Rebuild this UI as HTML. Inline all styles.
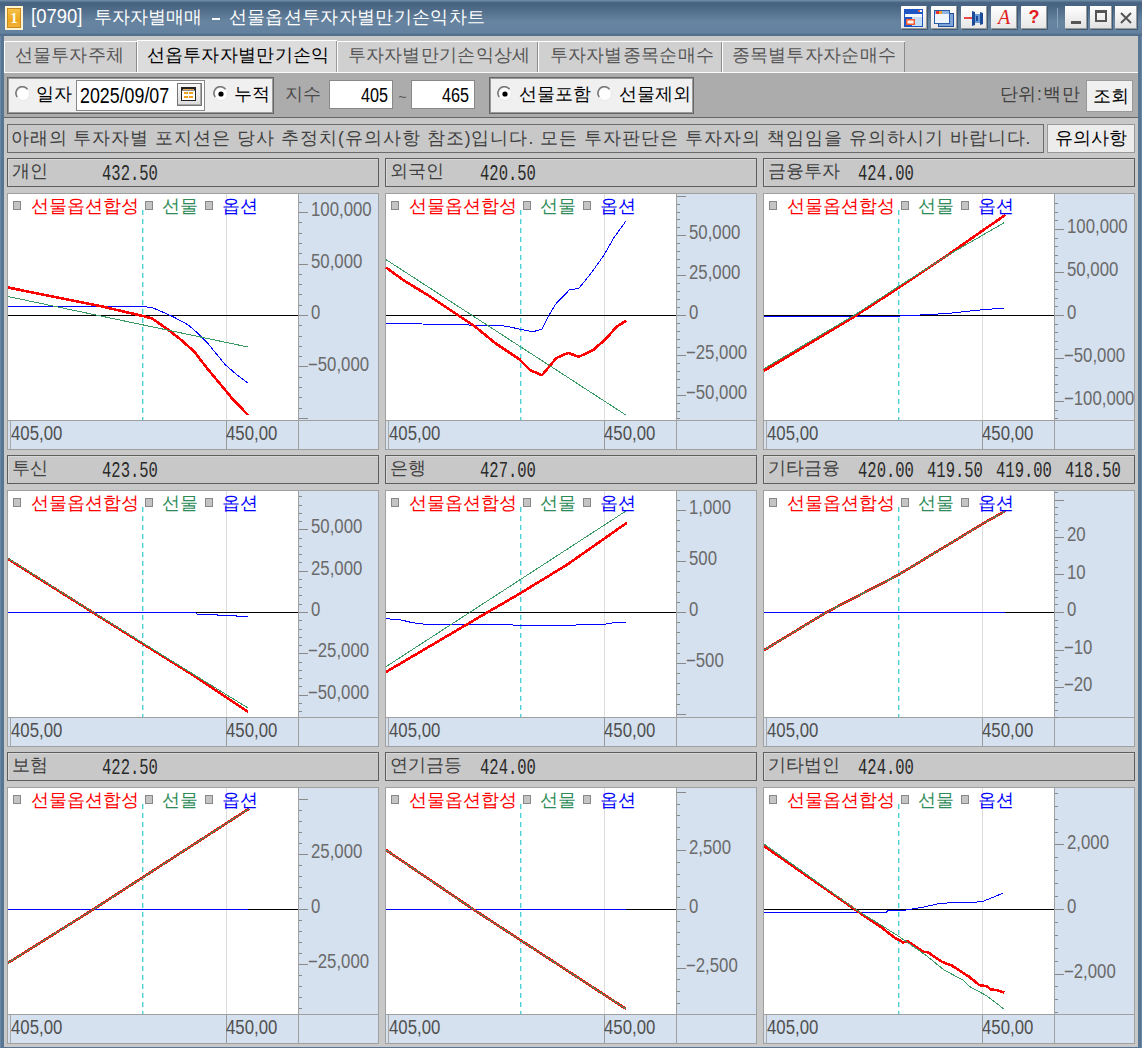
<!DOCTYPE html>
<html><head><meta charset="utf-8"><style>
html,body{margin:0;padding:0;}
body{width:1142px;height:1048px;overflow:hidden;position:relative;background:#5f7d9b;font-family:"Liberation Sans",sans-serif;}
</style></head><body>
<div style="position:absolute;left:0px;top:0px;width:1142px;height:36px;background:linear-gradient(to bottom,#6c89a3 0px,#6c89a3 1px,#4a6684 2px,#476381 5px,#6784a0 22px,#6382a0 33px,#56728f 34px,#516d8b 36px)"></div>
<div style="position:absolute;left:0px;top:36px;width:1142px;height:1012px;background:#587694"></div>
<div style="position:absolute;left:0px;top:36px;width:1px;height:1012px;background:#6a88a6"></div>
<div style="position:absolute;left:1141px;top:36px;width:1px;height:1012px;background:#6a88a6"></div>
<div style="position:absolute;left:4px;top:36px;width:1134px;height:1011px;background:#c8c8c8"></div>
<div style="position:absolute;left:5px;top:6px;width:18px;height:24px;background:#fff3d0;"></div>
<div style="position:absolute;left:7px;top:8px;width:14px;height:20px;background:linear-gradient(#f7c34a,#eea71f 60%,#f2b23a);box-shadow:inset 0 0 0 1px #c88a20;"></div>
<div style="position:absolute;left:7px;top:9px;width:14px;height:18px;font-family:'Liberation Serif',serif;font-weight:bold;font-size:15px;line-height:18px;text-align:center;color:#fffbe6">1</div>
<div style="position:absolute;left:30.98px;top:6.45px;font-size:20.5px;line-height:20.5px;white-space:nowrap;color:#ffffff;font-family:'Liberation Sans', sans-serif;transform:scaleX(0.9);transform-origin:0 0;">[0790]</div>
<div style="position:absolute;left:93.50px;top:9.00px;font-size:17.5px;line-height:17.5px;white-space:nowrap;color:#ffffff;font-family:'Liberation Sans', sans-serif;">투자자별매매</div>
<div style="position:absolute;left:212px;top:18px;width:8px;height:2px;background:#f4f6f8"></div>
<div style="position:absolute;left:228.50px;top:9.00px;font-size:17.5px;line-height:17.5px;white-space:nowrap;color:#ffffff;font-family:'Liberation Sans', sans-serif;letter-spacing:0.35px">선물옵션투자자별만기손익차트</div>
<div style="position:absolute;left:901px;top:6px;width:26px;height:23px;background:linear-gradient(#ffffff,#e6e6e6);box-shadow:inset -1px -1px 0 #9a9a9a, 1px 1px 0 #3f5a76;border-radius:1px"></div>
<div style="position:absolute;left:931px;top:6px;width:26px;height:23px;background:linear-gradient(#ffffff,#e6e6e6);box-shadow:inset -1px -1px 0 #9a9a9a, 1px 1px 0 #3f5a76;border-radius:1px"></div>
<div style="position:absolute;left:961px;top:6px;width:26px;height:23px;background:linear-gradient(#ffffff,#e6e6e6);box-shadow:inset -1px -1px 0 #9a9a9a, 1px 1px 0 #3f5a76;border-radius:1px"></div>
<div style="position:absolute;left:991px;top:6px;width:26px;height:23px;background:linear-gradient(#ffffff,#e6e6e6);box-shadow:inset -1px -1px 0 #9a9a9a, 1px 1px 0 #3f5a76;border-radius:1px"></div>
<div style="position:absolute;left:1021px;top:6px;width:26px;height:23px;background:linear-gradient(#ffffff,#e6e6e6);box-shadow:inset -1px -1px 0 #9a9a9a, 1px 1px 0 #3f5a76;border-radius:1px"></div>
<svg style="position:absolute;left:901px;top:6px" width="26" height="23"><rect x="3" y="3" width="19" height="18" fill="#1f56c4"/><rect x="4" y="8" width="17" height="3" fill="#f4f8ff"/><rect x="11" y="11" width="10" height="9" fill="#c4def8"/><rect x="17" y="4" width="2" height="2" fill="#f06040"/><rect x="19" y="4" width="2" height="2" fill="#f0f0f0"/><rect x="5" y="13" width="9" height="6" fill="#ff5a30"/><rect x="6.5" y="14.5" width="6" height="3" fill="#f8f8f8"/></svg>
<svg style="position:absolute;left:931px;top:6px" width="26" height="23"><rect x="7.5" y="7.5" width="15" height="13" fill="#7fa4d8" stroke="#1f4f9c"/><rect x="3.5" y="4.5" width="15" height="13" fill="#eef4fc" stroke="#2a5aa8"/><rect x="4" y="5" width="14" height="3" fill="#8fb4e4"/><rect x="5" y="5" width="3" height="3" fill="#e83030"/><rect x="8" y="5" width="3" height="3" fill="#f0a030"/></svg>
<svg style="position:absolute;left:961px;top:6px" width="26" height="23"><rect x="3" y="11" width="8" height="2" fill="#e84848"/><path d="M11 5 L14 6 L14 19 L11 20 Z" fill="#1c4a98"/><rect x="14" y="8" width="5" height="9" fill="#6a9ad8"/><rect x="15" y="10" width="2" height="5" fill="#1c4a98"/><path d="M19 6 L22 7 L22 18 L19 19 Z" fill="#1c4a98"/></svg>
<div style="position:absolute;left:991px;top:6px;width:26px;height:23px;font-family:'Liberation Serif',serif;font-style:italic;font-size:20px;line-height:23px;text-align:center;color:#e02020">A</div>
<div style="position:absolute;left:1021px;top:6px;width:26px;height:23px;font-family:'Liberation Sans',sans-serif;font-weight:bold;font-size:18px;line-height:23px;text-align:center;color:#e02020">?</div>
<div style="position:absolute;left:1057px;top:8px;width:1px;height:20px;background:#8aa2ba"></div>
<div style="position:absolute;left:1065px;top:6px;width:22px;height:23px;background:linear-gradient(#ffffff,#e0e0e0);box-shadow:inset -1px -1px 0 #9a9a9a, 1px 1px 0 #3f5a76"></div>
<div style="position:absolute;left:1090px;top:6px;width:22px;height:23px;background:linear-gradient(#ffffff,#e0e0e0);box-shadow:inset -1px -1px 0 #9a9a9a, 1px 1px 0 #3f5a76"></div>
<div style="position:absolute;left:1115px;top:6px;width:22px;height:23px;background:linear-gradient(#ffffff,#e0e0e0);box-shadow:inset -1px -1px 0 #9a9a9a, 1px 1px 0 #3f5a76"></div>
<div style="position:absolute;left:1071px;top:21px;width:10px;height:3px;background:#555"></div>
<div style="position:absolute;left:1095px;top:10px;width:12px;height:12px;border:2px solid #555;border-top-width:3px;box-sizing:border-box"></div>
<svg style="position:absolute;left:1115px;top:6px" width="22" height="23"><path d="M6 7 L16 17 M16 7 L6 17" stroke="#555" stroke-width="2"/></svg>
<div style="position:absolute;left:4px;top:41px;width:133px;height:32px;background:#d0d0d0;border-top:1px solid #fff;border-left:1px solid #fff;box-sizing:border-box;box-shadow:inset -1px 0 0 #8c8c8c"></div>
<div style="position:absolute;left:14.50px;top:46.50px;font-size:17.5px;line-height:17.5px;white-space:nowrap;color:#555;font-family:'Liberation Sans', sans-serif;letter-spacing:0.3px">선물투자주체</div>
<div style="position:absolute;left:137px;top:40px;width:200px;height:33px;background:#dcdcdc;border-top:1px solid #fff;border-left:1px solid #fff;box-sizing:border-box;box-shadow:inset -1px 0 0 #999"></div>
<div style="position:absolute;left:146.50px;top:46.50px;font-size:17.5px;line-height:17.5px;white-space:nowrap;color:#000;font-family:'Liberation Sans', sans-serif;letter-spacing:0.3px">선옵투자자별만기손익</div>
<div style="position:absolute;left:337px;top:41px;width:201px;height:32px;background:#d0d0d0;border-top:1px solid #fff;border-left:1px solid #fff;box-sizing:border-box;box-shadow:inset -1px 0 0 #8c8c8c"></div>
<div style="position:absolute;left:347.50px;top:46.50px;font-size:17.5px;line-height:17.5px;white-space:nowrap;color:#555;font-family:'Liberation Sans', sans-serif;letter-spacing:0.3px">투자자별만기손익상세</div>
<div style="position:absolute;left:538px;top:41px;width:184px;height:32px;background:#d0d0d0;border-top:1px solid #fff;border-left:1px solid #fff;box-sizing:border-box;box-shadow:inset -1px 0 0 #8c8c8c"></div>
<div style="position:absolute;left:549.50px;top:46.50px;font-size:17.5px;line-height:17.5px;white-space:nowrap;color:#555;font-family:'Liberation Sans', sans-serif;letter-spacing:0.3px">투자자별종목순매수</div>
<div style="position:absolute;left:722px;top:41px;width:183px;height:32px;background:#d0d0d0;border-top:1px solid #fff;border-left:1px solid #fff;box-sizing:border-box;box-shadow:inset -1px 0 0 #8c8c8c"></div>
<div style="position:absolute;left:731.50px;top:46.50px;font-size:17.5px;line-height:17.5px;white-space:nowrap;color:#555;font-family:'Liberation Sans', sans-serif;letter-spacing:0.3px">종목별투자자순매수</div>
<div style="position:absolute;left:4px;top:72px;width:1134px;height:1px;background:#fafafa"></div>
<div style="position:absolute;left:4px;top:73px;width:1134px;height:44px;background:#acacac"></div>
<div style="position:absolute;left:4px;top:117px;width:1134px;height:1px;background:#666"></div>
<div style="position:absolute;left:7px;top:77px;width:267px;height:37px;background:#f0f0f0;border:1px solid #666;box-sizing:border-box;box-shadow:inset 0 0 0 1px #9a9a9a"></div>
<svg style="position:absolute;left:15px;top:86px" width="16" height="16"><circle cx="8" cy="8" r="6.5" fill="#fff" stroke="#e8e8e8"/><path d="M2.2 11 A6 6 0 0 1 12.5 3.2" fill="none" stroke="#777" stroke-width="1.6"/></svg>
<div style="position:absolute;left:35.50px;top:86.00px;font-size:17.5px;line-height:17.5px;white-space:nowrap;color:#000;font-family:'Liberation Sans', sans-serif;">일자</div>
<div style="position:absolute;left:76px;top:80px;width:129px;height:31px;background:#fff;border:1px solid #888;box-sizing:border-box"></div>
<div style="position:absolute;left:79.90px;top:84.80px;font-size:22px;line-height:22px;white-space:nowrap;color:#000;font-family:'Liberation Sans', sans-serif;transform:scaleX(0.81);transform-origin:0 0;">2025/09/07</div>
<div style="position:absolute;left:177px;top:83px;width:25px;height:23px;background:linear-gradient(#f8f8f8,#dcdcdc);border:1px solid #777;box-sizing:border-box;box-shadow:inset -1px -1px 0 #aaa"></div>
<svg style="position:absolute;left:181px;top:87px" width="15" height="14"><rect x="0.5" y="0.5" width="14" height="13" fill="#fff" stroke="#222"/><rect x="1" y="1" width="13" height="2.5" fill="#222"/><rect x="2" y="2" width="11" height="1" fill="#e0a860"/><rect x="3" y="5" width="4" height="2" fill="#f0a020"/><rect x="8" y="5" width="4" height="2" fill="#f0a020"/><rect x="3" y="9" width="4" height="2" fill="#f0a020"/><rect x="8" y="9" width="4" height="2" fill="#f0a020"/></svg>
<svg style="position:absolute;left:213px;top:86px" width="16" height="16"><circle cx="8" cy="8" r="6.5" fill="#fff" stroke="#e8e8e8"/><path d="M2.2 11 A6 6 0 0 1 12.5 3.2" fill="none" stroke="#777" stroke-width="1.6"/><circle cx="8" cy="8" r="2.6" fill="#000"/></svg>
<div style="position:absolute;left:233.50px;top:86.00px;font-size:17.5px;line-height:17.5px;white-space:nowrap;color:#000;font-family:'Liberation Sans', sans-serif;">누적</div>
<div style="position:absolute;left:284.50px;top:86.00px;font-size:17.5px;line-height:17.5px;white-space:nowrap;color:#4a4a4a;font-family:'Liberation Sans', sans-serif;">지수</div>
<div style="position:absolute;left:329px;top:80px;width:64px;height:29px;background:#fff;border:1px solid #888;box-sizing:border-box"></div>
<div style="position:absolute;left:360.60px;top:85.00px;font-size:20px;line-height:20px;white-space:nowrap;color:#000;font-family:'Liberation Sans', sans-serif;transform:scaleX(0.81);transform-origin:0 0;">405</div>
<div style="position:absolute;left:398.30px;top:89.60px;font-size:14px;line-height:14px;white-space:nowrap;color:#555;font-family:'Liberation Sans', sans-serif;">~</div>
<div style="position:absolute;left:411px;top:80px;width:64px;height:29px;background:#fff;border:1px solid #888;box-sizing:border-box"></div>
<div style="position:absolute;left:442.30px;top:85.00px;font-size:20px;line-height:20px;white-space:nowrap;color:#000;font-family:'Liberation Sans', sans-serif;transform:scaleX(0.81);transform-origin:0 0;">465</div>
<div style="position:absolute;left:489px;top:77px;width:205px;height:37px;background:#f0f0f0;border:1px solid #666;box-sizing:border-box;box-shadow:inset 0 0 0 1px #9a9a9a"></div>
<svg style="position:absolute;left:497px;top:86px" width="16" height="16"><circle cx="8" cy="8" r="6.5" fill="#fff" stroke="#e8e8e8"/><path d="M2.2 11 A6 6 0 0 1 12.5 3.2" fill="none" stroke="#777" stroke-width="1.6"/><circle cx="8" cy="8" r="2.6" fill="#000"/></svg>
<div style="position:absolute;left:518.50px;top:86.00px;font-size:17.5px;line-height:17.5px;white-space:nowrap;color:#000;font-family:'Liberation Sans', sans-serif;">선물포함</div>
<svg style="position:absolute;left:597px;top:86px" width="16" height="16"><circle cx="8" cy="8" r="6.5" fill="#fff" stroke="#e8e8e8"/><path d="M2.2 11 A6 6 0 0 1 12.5 3.2" fill="none" stroke="#777" stroke-width="1.6"/></svg>
<div style="position:absolute;left:618.50px;top:86.00px;font-size:17.5px;line-height:17.5px;white-space:nowrap;color:#000;font-family:'Liberation Sans', sans-serif;">선물제외</div>
<div style="position:absolute;left:999.50px;top:86.30px;font-size:17.5px;line-height:17.5px;white-space:nowrap;color:#404040;font-family:'Liberation Sans', sans-serif;letter-spacing:0.8px">단위:백만</div>
<div style="position:absolute;left:1086px;top:80px;width:47px;height:32px;background:#f0f0f0;border:1px solid #999;box-sizing:border-box"></div>
<div style="position:absolute;left:1092.50px;top:87.70px;font-size:17.5px;line-height:17.5px;white-space:nowrap;color:#000;font-family:'Liberation Sans', sans-serif;">조회</div>
<div style="position:absolute;left:7px;top:124px;width:1037px;height:29px;background:#c8c8c8;border:1px solid #6a6a6a;box-sizing:border-box"></div>
<div style="position:absolute;left:10.50px;top:130.30px;font-size:17.5px;line-height:17.5px;white-space:nowrap;color:#404040;font-family:'Liberation Sans', sans-serif;letter-spacing:1.0px">아래의 투자자별 포지션은 당사 추정치(유의사항 참조)입니다. 모든 투자판단은 투자자의 책임임을 유의하시기 바랍니다.</div>
<div style="position:absolute;left:1047px;top:124px;width:88px;height:29px;background:#ececec;border:1px solid #999;box-sizing:border-box"></div>
<div style="position:absolute;left:1054.50px;top:129.60px;font-size:17.5px;line-height:17.5px;white-space:nowrap;color:#000;font-family:'Liberation Sans', sans-serif;">유의사항</div>
<div style="position:absolute;left:7px;top:158px;width:372px;height:29px;background:#c8c8c8;border:1px solid #5e5e5e;box-sizing:border-box;box-shadow:inset 1px 1px 0 #d8d8d8"></div>
<div style="position:absolute;left:7px;top:193px;width:372px;height:257px;background:#d5e1ef;border:1px solid #a0a0a0;box-sizing:border-box"></div>
<div style="position:absolute;left:8px;top:194px;width:290px;height:226px;background:#ffffff"></div>
<div style="position:absolute;left:385px;top:158px;width:372px;height:29px;background:#c8c8c8;border:1px solid #5e5e5e;box-sizing:border-box;box-shadow:inset 1px 1px 0 #d8d8d8"></div>
<div style="position:absolute;left:385px;top:193px;width:372px;height:257px;background:#d5e1ef;border:1px solid #a0a0a0;box-sizing:border-box"></div>
<div style="position:absolute;left:386px;top:194px;width:290px;height:226px;background:#ffffff"></div>
<div style="position:absolute;left:763px;top:158px;width:372px;height:29px;background:#c8c8c8;border:1px solid #5e5e5e;box-sizing:border-box;box-shadow:inset 1px 1px 0 #d8d8d8"></div>
<div style="position:absolute;left:763px;top:193px;width:372px;height:257px;background:#d5e1ef;border:1px solid #a0a0a0;box-sizing:border-box"></div>
<div style="position:absolute;left:764px;top:194px;width:290px;height:226px;background:#ffffff"></div>
<div style="position:absolute;left:7px;top:455px;width:372px;height:29px;background:#c8c8c8;border:1px solid #5e5e5e;box-sizing:border-box;box-shadow:inset 1px 1px 0 #d8d8d8"></div>
<div style="position:absolute;left:7px;top:490px;width:372px;height:257px;background:#d5e1ef;border:1px solid #a0a0a0;box-sizing:border-box"></div>
<div style="position:absolute;left:8px;top:491px;width:290px;height:226px;background:#ffffff"></div>
<div style="position:absolute;left:385px;top:455px;width:372px;height:29px;background:#c8c8c8;border:1px solid #5e5e5e;box-sizing:border-box;box-shadow:inset 1px 1px 0 #d8d8d8"></div>
<div style="position:absolute;left:385px;top:490px;width:372px;height:257px;background:#d5e1ef;border:1px solid #a0a0a0;box-sizing:border-box"></div>
<div style="position:absolute;left:386px;top:491px;width:290px;height:226px;background:#ffffff"></div>
<div style="position:absolute;left:763px;top:455px;width:372px;height:29px;background:#c8c8c8;border:1px solid #5e5e5e;box-sizing:border-box;box-shadow:inset 1px 1px 0 #d8d8d8"></div>
<div style="position:absolute;left:763px;top:490px;width:372px;height:257px;background:#d5e1ef;border:1px solid #a0a0a0;box-sizing:border-box"></div>
<div style="position:absolute;left:764px;top:491px;width:290px;height:226px;background:#ffffff"></div>
<div style="position:absolute;left:7px;top:752px;width:372px;height:29px;background:#c8c8c8;border:1px solid #5e5e5e;box-sizing:border-box;box-shadow:inset 1px 1px 0 #d8d8d8"></div>
<div style="position:absolute;left:7px;top:787px;width:372px;height:257px;background:#d5e1ef;border:1px solid #a0a0a0;box-sizing:border-box"></div>
<div style="position:absolute;left:8px;top:788px;width:290px;height:226px;background:#ffffff"></div>
<div style="position:absolute;left:385px;top:752px;width:372px;height:29px;background:#c8c8c8;border:1px solid #5e5e5e;box-sizing:border-box;box-shadow:inset 1px 1px 0 #d8d8d8"></div>
<div style="position:absolute;left:385px;top:787px;width:372px;height:257px;background:#d5e1ef;border:1px solid #a0a0a0;box-sizing:border-box"></div>
<div style="position:absolute;left:386px;top:788px;width:290px;height:226px;background:#ffffff"></div>
<div style="position:absolute;left:763px;top:752px;width:372px;height:29px;background:#c8c8c8;border:1px solid #5e5e5e;box-sizing:border-box;box-shadow:inset 1px 1px 0 #d8d8d8"></div>
<div style="position:absolute;left:763px;top:787px;width:372px;height:257px;background:#d5e1ef;border:1px solid #a0a0a0;box-sizing:border-box"></div>
<div style="position:absolute;left:764px;top:788px;width:290px;height:226px;background:#ffffff"></div>
<svg style="position:absolute;left:0;top:0" width="1142" height="1048" shape-rendering="crispEdges"><rect x="8" y="420" width="370" height="1" fill="#a0a0a0"/>
<rect x="298" y="194" width="1" height="255" fill="#a0a0a0"/>
<rect x="10" y="421" width="1" height="28" fill="#a8a8a8"/>
<rect x="226" y="194" width="1" height="226" fill="#dcdcdc"/>
<rect x="226" y="421" width="1" height="28" fill="#9a9a9a"/>
<rect x="142" y="210" width="1" height="5" fill="#4cd2d6"/>
<rect x="143" y="210" width="1" height="5" fill="#b8ecec"/>
<rect x="142" y="219" width="1" height="5" fill="#4cd2d6"/>
<rect x="143" y="219" width="1" height="5" fill="#b8ecec"/>
<rect x="142" y="228" width="1" height="5" fill="#4cd2d6"/>
<rect x="143" y="228" width="1" height="5" fill="#b8ecec"/>
<rect x="142" y="237" width="1" height="5" fill="#4cd2d6"/>
<rect x="143" y="237" width="1" height="5" fill="#b8ecec"/>
<rect x="142" y="246" width="1" height="5" fill="#4cd2d6"/>
<rect x="143" y="246" width="1" height="5" fill="#b8ecec"/>
<rect x="142" y="255" width="1" height="5" fill="#4cd2d6"/>
<rect x="143" y="255" width="1" height="5" fill="#b8ecec"/>
<rect x="142" y="264" width="1" height="5" fill="#4cd2d6"/>
<rect x="143" y="264" width="1" height="5" fill="#b8ecec"/>
<rect x="142" y="273" width="1" height="5" fill="#4cd2d6"/>
<rect x="143" y="273" width="1" height="5" fill="#b8ecec"/>
<rect x="142" y="282" width="1" height="5" fill="#4cd2d6"/>
<rect x="143" y="282" width="1" height="5" fill="#b8ecec"/>
<rect x="142" y="291" width="1" height="5" fill="#4cd2d6"/>
<rect x="143" y="291" width="1" height="5" fill="#b8ecec"/>
<rect x="142" y="300" width="1" height="5" fill="#4cd2d6"/>
<rect x="143" y="300" width="1" height="5" fill="#b8ecec"/>
<rect x="142" y="309" width="1" height="5" fill="#4cd2d6"/>
<rect x="143" y="309" width="1" height="5" fill="#b8ecec"/>
<rect x="142" y="318" width="1" height="5" fill="#4cd2d6"/>
<rect x="143" y="318" width="1" height="5" fill="#b8ecec"/>
<rect x="142" y="327" width="1" height="5" fill="#4cd2d6"/>
<rect x="143" y="327" width="1" height="5" fill="#b8ecec"/>
<rect x="142" y="336" width="1" height="5" fill="#4cd2d6"/>
<rect x="143" y="336" width="1" height="5" fill="#b8ecec"/>
<rect x="142" y="345" width="1" height="5" fill="#4cd2d6"/>
<rect x="143" y="345" width="1" height="5" fill="#b8ecec"/>
<rect x="142" y="354" width="1" height="5" fill="#4cd2d6"/>
<rect x="143" y="354" width="1" height="5" fill="#b8ecec"/>
<rect x="142" y="363" width="1" height="5" fill="#4cd2d6"/>
<rect x="143" y="363" width="1" height="5" fill="#b8ecec"/>
<rect x="142" y="372" width="1" height="5" fill="#4cd2d6"/>
<rect x="143" y="372" width="1" height="5" fill="#b8ecec"/>
<rect x="142" y="381" width="1" height="5" fill="#4cd2d6"/>
<rect x="143" y="381" width="1" height="5" fill="#b8ecec"/>
<rect x="142" y="390" width="1" height="5" fill="#4cd2d6"/>
<rect x="143" y="390" width="1" height="5" fill="#b8ecec"/>
<rect x="142" y="399" width="1" height="5" fill="#4cd2d6"/>
<rect x="143" y="399" width="1" height="5" fill="#b8ecec"/>
<rect x="142" y="408" width="1" height="5" fill="#4cd2d6"/>
<rect x="143" y="408" width="1" height="5" fill="#b8ecec"/>
<rect x="142" y="417" width="1" height="3" fill="#4cd2d6"/>
<rect x="143" y="417" width="1" height="3" fill="#b8ecec"/>
<rect x="299" y="202" width="3" height="1" fill="#8a8a8a"/>
<rect x="299" y="212" width="9" height="1" fill="#8a8a8a"/>
<rect x="299" y="222" width="3" height="1" fill="#8a8a8a"/>
<rect x="299" y="233" width="3" height="1" fill="#8a8a8a"/>
<rect x="299" y="243" width="3" height="1" fill="#8a8a8a"/>
<rect x="299" y="253" width="3" height="1" fill="#8a8a8a"/>
<rect x="299" y="264" width="9" height="1" fill="#8a8a8a"/>
<rect x="299" y="274" width="3" height="1" fill="#8a8a8a"/>
<rect x="299" y="284" width="3" height="1" fill="#8a8a8a"/>
<rect x="299" y="294" width="3" height="1" fill="#8a8a8a"/>
<rect x="299" y="305" width="3" height="1" fill="#8a8a8a"/>
<rect x="299" y="315" width="9" height="1" fill="#8a8a8a"/>
<rect x="299" y="325" width="3" height="1" fill="#8a8a8a"/>
<rect x="299" y="336" width="3" height="1" fill="#8a8a8a"/>
<rect x="299" y="346" width="3" height="1" fill="#8a8a8a"/>
<rect x="299" y="356" width="3" height="1" fill="#8a8a8a"/>
<rect x="299" y="366" width="9" height="1" fill="#8a8a8a"/>
<rect x="299" y="377" width="3" height="1" fill="#8a8a8a"/>
<rect x="299" y="387" width="3" height="1" fill="#8a8a8a"/>
<rect x="299" y="397" width="3" height="1" fill="#8a8a8a"/>
<rect x="299" y="408" width="3" height="1" fill="#8a8a8a"/>
<rect x="299" y="418" width="9" height="1" fill="#8a8a8a"/>
<rect x="8" y="315" width="290" height="1" fill="#000"/>
<rect x="13.5" y="201.5" width="7" height="8" fill="#c4c4c4" stroke="#888"/>
<rect x="145.5" y="201.5" width="7" height="8" fill="#c4c4c4" stroke="#888"/>
<rect x="205.5" y="201.5" width="7" height="8" fill="#c4c4c4" stroke="#888"/>
<polyline points="8.0,306.5 144.2,306.5 153.2,308.0 172.5,316.4 188.0,324.8 197.0,332.5 207.3,342.8 225.3,364.7 237.0,375.0 248.0,383.0" fill="none" stroke="#0000ff" stroke-width="1"/>
<polyline points="8.0,287.5 60.0,298.0 100.0,306.0 142.9,316.0 151.9,318.3 168.6,330.0 181.5,340.2 194.4,351.8 207.3,368.6 220.2,384.0 233.0,399.5 248.0,415.0" fill="none" stroke="#ff0000" stroke-width="2.6" stroke-linejoin="round"/>
<polyline points="8.0,296.5 248.0,347.0" fill="none" stroke="#3a9a64" stroke-width="1"/>
<rect x="386" y="420" width="370" height="1" fill="#a0a0a0"/>
<rect x="676" y="194" width="1" height="255" fill="#a0a0a0"/>
<rect x="388" y="421" width="1" height="28" fill="#a8a8a8"/>
<rect x="604" y="194" width="1" height="226" fill="#dcdcdc"/>
<rect x="604" y="421" width="1" height="28" fill="#9a9a9a"/>
<rect x="520" y="210" width="1" height="5" fill="#4cd2d6"/>
<rect x="521" y="210" width="1" height="5" fill="#b8ecec"/>
<rect x="520" y="219" width="1" height="5" fill="#4cd2d6"/>
<rect x="521" y="219" width="1" height="5" fill="#b8ecec"/>
<rect x="520" y="228" width="1" height="5" fill="#4cd2d6"/>
<rect x="521" y="228" width="1" height="5" fill="#b8ecec"/>
<rect x="520" y="237" width="1" height="5" fill="#4cd2d6"/>
<rect x="521" y="237" width="1" height="5" fill="#b8ecec"/>
<rect x="520" y="246" width="1" height="5" fill="#4cd2d6"/>
<rect x="521" y="246" width="1" height="5" fill="#b8ecec"/>
<rect x="520" y="255" width="1" height="5" fill="#4cd2d6"/>
<rect x="521" y="255" width="1" height="5" fill="#b8ecec"/>
<rect x="520" y="264" width="1" height="5" fill="#4cd2d6"/>
<rect x="521" y="264" width="1" height="5" fill="#b8ecec"/>
<rect x="520" y="273" width="1" height="5" fill="#4cd2d6"/>
<rect x="521" y="273" width="1" height="5" fill="#b8ecec"/>
<rect x="520" y="282" width="1" height="5" fill="#4cd2d6"/>
<rect x="521" y="282" width="1" height="5" fill="#b8ecec"/>
<rect x="520" y="291" width="1" height="5" fill="#4cd2d6"/>
<rect x="521" y="291" width="1" height="5" fill="#b8ecec"/>
<rect x="520" y="300" width="1" height="5" fill="#4cd2d6"/>
<rect x="521" y="300" width="1" height="5" fill="#b8ecec"/>
<rect x="520" y="309" width="1" height="5" fill="#4cd2d6"/>
<rect x="521" y="309" width="1" height="5" fill="#b8ecec"/>
<rect x="520" y="318" width="1" height="5" fill="#4cd2d6"/>
<rect x="521" y="318" width="1" height="5" fill="#b8ecec"/>
<rect x="520" y="327" width="1" height="5" fill="#4cd2d6"/>
<rect x="521" y="327" width="1" height="5" fill="#b8ecec"/>
<rect x="520" y="336" width="1" height="5" fill="#4cd2d6"/>
<rect x="521" y="336" width="1" height="5" fill="#b8ecec"/>
<rect x="520" y="345" width="1" height="5" fill="#4cd2d6"/>
<rect x="521" y="345" width="1" height="5" fill="#b8ecec"/>
<rect x="520" y="354" width="1" height="5" fill="#4cd2d6"/>
<rect x="521" y="354" width="1" height="5" fill="#b8ecec"/>
<rect x="520" y="363" width="1" height="5" fill="#4cd2d6"/>
<rect x="521" y="363" width="1" height="5" fill="#b8ecec"/>
<rect x="520" y="372" width="1" height="5" fill="#4cd2d6"/>
<rect x="521" y="372" width="1" height="5" fill="#b8ecec"/>
<rect x="520" y="381" width="1" height="5" fill="#4cd2d6"/>
<rect x="521" y="381" width="1" height="5" fill="#b8ecec"/>
<rect x="520" y="390" width="1" height="5" fill="#4cd2d6"/>
<rect x="521" y="390" width="1" height="5" fill="#b8ecec"/>
<rect x="520" y="399" width="1" height="5" fill="#4cd2d6"/>
<rect x="521" y="399" width="1" height="5" fill="#b8ecec"/>
<rect x="520" y="408" width="1" height="5" fill="#4cd2d6"/>
<rect x="521" y="408" width="1" height="5" fill="#b8ecec"/>
<rect x="520" y="417" width="1" height="3" fill="#4cd2d6"/>
<rect x="521" y="417" width="1" height="3" fill="#b8ecec"/>
<rect x="677" y="196" width="9" height="1" fill="#8a8a8a"/>
<rect x="677" y="204" width="3" height="1" fill="#8a8a8a"/>
<rect x="677" y="212" width="3" height="1" fill="#8a8a8a"/>
<rect x="677" y="219" width="3" height="1" fill="#8a8a8a"/>
<rect x="677" y="227" width="3" height="1" fill="#8a8a8a"/>
<rect x="677" y="235" width="9" height="1" fill="#8a8a8a"/>
<rect x="677" y="243" width="3" height="1" fill="#8a8a8a"/>
<rect x="677" y="251" width="3" height="1" fill="#8a8a8a"/>
<rect x="677" y="259" width="3" height="1" fill="#8a8a8a"/>
<rect x="677" y="267" width="3" height="1" fill="#8a8a8a"/>
<rect x="677" y="275" width="9" height="1" fill="#8a8a8a"/>
<rect x="677" y="283" width="3" height="1" fill="#8a8a8a"/>
<rect x="677" y="291" width="3" height="1" fill="#8a8a8a"/>
<rect x="677" y="299" width="3" height="1" fill="#8a8a8a"/>
<rect x="677" y="307" width="3" height="1" fill="#8a8a8a"/>
<rect x="677" y="315" width="9" height="1" fill="#8a8a8a"/>
<rect x="677" y="323" width="3" height="1" fill="#8a8a8a"/>
<rect x="677" y="331" width="3" height="1" fill="#8a8a8a"/>
<rect x="677" y="339" width="3" height="1" fill="#8a8a8a"/>
<rect x="677" y="347" width="3" height="1" fill="#8a8a8a"/>
<rect x="677" y="355" width="9" height="1" fill="#8a8a8a"/>
<rect x="677" y="363" width="3" height="1" fill="#8a8a8a"/>
<rect x="677" y="371" width="3" height="1" fill="#8a8a8a"/>
<rect x="677" y="379" width="3" height="1" fill="#8a8a8a"/>
<rect x="677" y="387" width="3" height="1" fill="#8a8a8a"/>
<rect x="677" y="395" width="9" height="1" fill="#8a8a8a"/>
<rect x="677" y="403" width="3" height="1" fill="#8a8a8a"/>
<rect x="677" y="411" width="3" height="1" fill="#8a8a8a"/>
<rect x="677" y="418" width="3" height="1" fill="#8a8a8a"/>
<rect x="386" y="315" width="290" height="1" fill="#000"/>
<rect x="391.5" y="201.5" width="7" height="8" fill="#c4c4c4" stroke="#888"/>
<rect x="523.5" y="201.5" width="7" height="8" fill="#c4c4c4" stroke="#888"/>
<rect x="583.5" y="201.5" width="7" height="8" fill="#c4c4c4" stroke="#888"/>
<polyline points="386.0,323.2 422.4,324.0 482.8,325.3 506.5,326.1 519.6,329.2 532.7,331.8 541.9,329.2 548.5,316.1 556.4,303.0 569.5,289.8 578.7,288.5 590.5,274.0 603.6,255.7 614.2,237.3 626.0,221.0" fill="none" stroke="#0000ff" stroke-width="1"/>
<polyline points="386.0,267.5 404.0,280.6 427.7,295.0 451.3,310.8 475.0,326.6 496.0,343.7 519.6,359.4 530.0,370.0 542.0,375.2 556.4,358.0 568.2,352.9 578.7,356.8 593.1,350.2 606.3,338.4 616.8,326.6 626.5,320.5" fill="none" stroke="#ff0000" stroke-width="2.6" stroke-linejoin="round"/>
<polyline points="386.0,259.6 626.0,415.1" fill="none" stroke="#3a9a64" stroke-width="1"/>
<rect x="764" y="420" width="370" height="1" fill="#a0a0a0"/>
<rect x="1054" y="194" width="1" height="255" fill="#a0a0a0"/>
<rect x="766" y="421" width="1" height="28" fill="#a8a8a8"/>
<rect x="982" y="194" width="1" height="226" fill="#dcdcdc"/>
<rect x="982" y="421" width="1" height="28" fill="#9a9a9a"/>
<rect x="898" y="210" width="1" height="5" fill="#4cd2d6"/>
<rect x="899" y="210" width="1" height="5" fill="#b8ecec"/>
<rect x="898" y="219" width="1" height="5" fill="#4cd2d6"/>
<rect x="899" y="219" width="1" height="5" fill="#b8ecec"/>
<rect x="898" y="228" width="1" height="5" fill="#4cd2d6"/>
<rect x="899" y="228" width="1" height="5" fill="#b8ecec"/>
<rect x="898" y="237" width="1" height="5" fill="#4cd2d6"/>
<rect x="899" y="237" width="1" height="5" fill="#b8ecec"/>
<rect x="898" y="246" width="1" height="5" fill="#4cd2d6"/>
<rect x="899" y="246" width="1" height="5" fill="#b8ecec"/>
<rect x="898" y="255" width="1" height="5" fill="#4cd2d6"/>
<rect x="899" y="255" width="1" height="5" fill="#b8ecec"/>
<rect x="898" y="264" width="1" height="5" fill="#4cd2d6"/>
<rect x="899" y="264" width="1" height="5" fill="#b8ecec"/>
<rect x="898" y="273" width="1" height="5" fill="#4cd2d6"/>
<rect x="899" y="273" width="1" height="5" fill="#b8ecec"/>
<rect x="898" y="282" width="1" height="5" fill="#4cd2d6"/>
<rect x="899" y="282" width="1" height="5" fill="#b8ecec"/>
<rect x="898" y="291" width="1" height="5" fill="#4cd2d6"/>
<rect x="899" y="291" width="1" height="5" fill="#b8ecec"/>
<rect x="898" y="300" width="1" height="5" fill="#4cd2d6"/>
<rect x="899" y="300" width="1" height="5" fill="#b8ecec"/>
<rect x="898" y="309" width="1" height="5" fill="#4cd2d6"/>
<rect x="899" y="309" width="1" height="5" fill="#b8ecec"/>
<rect x="898" y="318" width="1" height="5" fill="#4cd2d6"/>
<rect x="899" y="318" width="1" height="5" fill="#b8ecec"/>
<rect x="898" y="327" width="1" height="5" fill="#4cd2d6"/>
<rect x="899" y="327" width="1" height="5" fill="#b8ecec"/>
<rect x="898" y="336" width="1" height="5" fill="#4cd2d6"/>
<rect x="899" y="336" width="1" height="5" fill="#b8ecec"/>
<rect x="898" y="345" width="1" height="5" fill="#4cd2d6"/>
<rect x="899" y="345" width="1" height="5" fill="#b8ecec"/>
<rect x="898" y="354" width="1" height="5" fill="#4cd2d6"/>
<rect x="899" y="354" width="1" height="5" fill="#b8ecec"/>
<rect x="898" y="363" width="1" height="5" fill="#4cd2d6"/>
<rect x="899" y="363" width="1" height="5" fill="#b8ecec"/>
<rect x="898" y="372" width="1" height="5" fill="#4cd2d6"/>
<rect x="899" y="372" width="1" height="5" fill="#b8ecec"/>
<rect x="898" y="381" width="1" height="5" fill="#4cd2d6"/>
<rect x="899" y="381" width="1" height="5" fill="#b8ecec"/>
<rect x="898" y="390" width="1" height="5" fill="#4cd2d6"/>
<rect x="899" y="390" width="1" height="5" fill="#b8ecec"/>
<rect x="898" y="399" width="1" height="5" fill="#4cd2d6"/>
<rect x="899" y="399" width="1" height="5" fill="#b8ecec"/>
<rect x="898" y="408" width="1" height="5" fill="#4cd2d6"/>
<rect x="899" y="408" width="1" height="5" fill="#b8ecec"/>
<rect x="898" y="417" width="1" height="3" fill="#4cd2d6"/>
<rect x="899" y="417" width="1" height="3" fill="#b8ecec"/>
<rect x="1055" y="203" width="3" height="1" fill="#8a8a8a"/>
<rect x="1055" y="212" width="3" height="1" fill="#8a8a8a"/>
<rect x="1055" y="220" width="3" height="1" fill="#8a8a8a"/>
<rect x="1055" y="229" width="9" height="1" fill="#8a8a8a"/>
<rect x="1055" y="238" width="3" height="1" fill="#8a8a8a"/>
<rect x="1055" y="246" width="3" height="1" fill="#8a8a8a"/>
<rect x="1055" y="255" width="3" height="1" fill="#8a8a8a"/>
<rect x="1055" y="263" width="3" height="1" fill="#8a8a8a"/>
<rect x="1055" y="272" width="9" height="1" fill="#8a8a8a"/>
<rect x="1055" y="281" width="3" height="1" fill="#8a8a8a"/>
<rect x="1055" y="289" width="3" height="1" fill="#8a8a8a"/>
<rect x="1055" y="298" width="3" height="1" fill="#8a8a8a"/>
<rect x="1055" y="306" width="3" height="1" fill="#8a8a8a"/>
<rect x="1055" y="315" width="9" height="1" fill="#8a8a8a"/>
<rect x="1055" y="324" width="3" height="1" fill="#8a8a8a"/>
<rect x="1055" y="332" width="3" height="1" fill="#8a8a8a"/>
<rect x="1055" y="341" width="3" height="1" fill="#8a8a8a"/>
<rect x="1055" y="349" width="3" height="1" fill="#8a8a8a"/>
<rect x="1055" y="358" width="9" height="1" fill="#8a8a8a"/>
<rect x="1055" y="367" width="3" height="1" fill="#8a8a8a"/>
<rect x="1055" y="375" width="3" height="1" fill="#8a8a8a"/>
<rect x="1055" y="384" width="3" height="1" fill="#8a8a8a"/>
<rect x="1055" y="392" width="3" height="1" fill="#8a8a8a"/>
<rect x="1055" y="401" width="9" height="1" fill="#8a8a8a"/>
<rect x="1055" y="410" width="3" height="1" fill="#8a8a8a"/>
<rect x="1055" y="418" width="3" height="1" fill="#8a8a8a"/>
<rect x="764" y="315" width="290" height="1" fill="#000"/>
<rect x="769.5" y="201.5" width="7" height="8" fill="#c4c4c4" stroke="#888"/>
<rect x="901.5" y="201.5" width="7" height="8" fill="#c4c4c4" stroke="#888"/>
<rect x="961.5" y="201.5" width="7" height="8" fill="#c4c4c4" stroke="#888"/>
<polyline points="764.0,316.5 889.7,316.5 923.9,314.8 947.5,313.5 984.3,309.5 1004.0,308.2" fill="none" stroke="#0000ff" stroke-width="1"/>
<polyline points="764.0,370.7 853.0,317.4 897.6,288.5 944.9,257.0 984.3,229.4 1005.3,215.0" fill="none" stroke="#ff0000" stroke-width="2.6" stroke-linejoin="round"/>
<polyline points="764.0,368.6 853.0,316.0 897.6,287.0 944.9,257.0 1004.0,222.8" fill="none" stroke="#3a9a64" stroke-width="1"/>
<rect x="8" y="717" width="370" height="1" fill="#a0a0a0"/>
<rect x="298" y="491" width="1" height="255" fill="#a0a0a0"/>
<rect x="10" y="718" width="1" height="28" fill="#a8a8a8"/>
<rect x="226" y="491" width="1" height="226" fill="#dcdcdc"/>
<rect x="226" y="718" width="1" height="28" fill="#9a9a9a"/>
<rect x="142" y="507" width="1" height="5" fill="#4cd2d6"/>
<rect x="143" y="507" width="1" height="5" fill="#b8ecec"/>
<rect x="142" y="516" width="1" height="5" fill="#4cd2d6"/>
<rect x="143" y="516" width="1" height="5" fill="#b8ecec"/>
<rect x="142" y="525" width="1" height="5" fill="#4cd2d6"/>
<rect x="143" y="525" width="1" height="5" fill="#b8ecec"/>
<rect x="142" y="534" width="1" height="5" fill="#4cd2d6"/>
<rect x="143" y="534" width="1" height="5" fill="#b8ecec"/>
<rect x="142" y="543" width="1" height="5" fill="#4cd2d6"/>
<rect x="143" y="543" width="1" height="5" fill="#b8ecec"/>
<rect x="142" y="552" width="1" height="5" fill="#4cd2d6"/>
<rect x="143" y="552" width="1" height="5" fill="#b8ecec"/>
<rect x="142" y="561" width="1" height="5" fill="#4cd2d6"/>
<rect x="143" y="561" width="1" height="5" fill="#b8ecec"/>
<rect x="142" y="570" width="1" height="5" fill="#4cd2d6"/>
<rect x="143" y="570" width="1" height="5" fill="#b8ecec"/>
<rect x="142" y="579" width="1" height="5" fill="#4cd2d6"/>
<rect x="143" y="579" width="1" height="5" fill="#b8ecec"/>
<rect x="142" y="588" width="1" height="5" fill="#4cd2d6"/>
<rect x="143" y="588" width="1" height="5" fill="#b8ecec"/>
<rect x="142" y="597" width="1" height="5" fill="#4cd2d6"/>
<rect x="143" y="597" width="1" height="5" fill="#b8ecec"/>
<rect x="142" y="606" width="1" height="5" fill="#4cd2d6"/>
<rect x="143" y="606" width="1" height="5" fill="#b8ecec"/>
<rect x="142" y="615" width="1" height="5" fill="#4cd2d6"/>
<rect x="143" y="615" width="1" height="5" fill="#b8ecec"/>
<rect x="142" y="624" width="1" height="5" fill="#4cd2d6"/>
<rect x="143" y="624" width="1" height="5" fill="#b8ecec"/>
<rect x="142" y="633" width="1" height="5" fill="#4cd2d6"/>
<rect x="143" y="633" width="1" height="5" fill="#b8ecec"/>
<rect x="142" y="642" width="1" height="5" fill="#4cd2d6"/>
<rect x="143" y="642" width="1" height="5" fill="#b8ecec"/>
<rect x="142" y="651" width="1" height="5" fill="#4cd2d6"/>
<rect x="143" y="651" width="1" height="5" fill="#b8ecec"/>
<rect x="142" y="660" width="1" height="5" fill="#4cd2d6"/>
<rect x="143" y="660" width="1" height="5" fill="#b8ecec"/>
<rect x="142" y="669" width="1" height="5" fill="#4cd2d6"/>
<rect x="143" y="669" width="1" height="5" fill="#b8ecec"/>
<rect x="142" y="678" width="1" height="5" fill="#4cd2d6"/>
<rect x="143" y="678" width="1" height="5" fill="#b8ecec"/>
<rect x="142" y="687" width="1" height="5" fill="#4cd2d6"/>
<rect x="143" y="687" width="1" height="5" fill="#b8ecec"/>
<rect x="142" y="696" width="1" height="5" fill="#4cd2d6"/>
<rect x="143" y="696" width="1" height="5" fill="#b8ecec"/>
<rect x="142" y="705" width="1" height="5" fill="#4cd2d6"/>
<rect x="143" y="705" width="1" height="5" fill="#b8ecec"/>
<rect x="142" y="714" width="1" height="3" fill="#4cd2d6"/>
<rect x="143" y="714" width="1" height="3" fill="#b8ecec"/>
<rect x="299" y="496" width="3" height="1" fill="#8a8a8a"/>
<rect x="299" y="505" width="3" height="1" fill="#8a8a8a"/>
<rect x="299" y="513" width="3" height="1" fill="#8a8a8a"/>
<rect x="299" y="521" width="3" height="1" fill="#8a8a8a"/>
<rect x="299" y="529" width="9" height="1" fill="#8a8a8a"/>
<rect x="299" y="538" width="3" height="1" fill="#8a8a8a"/>
<rect x="299" y="546" width="3" height="1" fill="#8a8a8a"/>
<rect x="299" y="554" width="3" height="1" fill="#8a8a8a"/>
<rect x="299" y="562" width="3" height="1" fill="#8a8a8a"/>
<rect x="299" y="571" width="9" height="1" fill="#8a8a8a"/>
<rect x="299" y="579" width="3" height="1" fill="#8a8a8a"/>
<rect x="299" y="587" width="3" height="1" fill="#8a8a8a"/>
<rect x="299" y="595" width="3" height="1" fill="#8a8a8a"/>
<rect x="299" y="604" width="3" height="1" fill="#8a8a8a"/>
<rect x="299" y="612" width="9" height="1" fill="#8a8a8a"/>
<rect x="299" y="620" width="3" height="1" fill="#8a8a8a"/>
<rect x="299" y="629" width="3" height="1" fill="#8a8a8a"/>
<rect x="299" y="637" width="3" height="1" fill="#8a8a8a"/>
<rect x="299" y="645" width="3" height="1" fill="#8a8a8a"/>
<rect x="299" y="653" width="9" height="1" fill="#8a8a8a"/>
<rect x="299" y="662" width="3" height="1" fill="#8a8a8a"/>
<rect x="299" y="670" width="3" height="1" fill="#8a8a8a"/>
<rect x="299" y="678" width="3" height="1" fill="#8a8a8a"/>
<rect x="299" y="686" width="3" height="1" fill="#8a8a8a"/>
<rect x="299" y="695" width="9" height="1" fill="#8a8a8a"/>
<rect x="299" y="703" width="3" height="1" fill="#8a8a8a"/>
<rect x="299" y="711" width="3" height="1" fill="#8a8a8a"/>
<rect x="8" y="612" width="290" height="1" fill="#000"/>
<rect x="13.5" y="498.5" width="7" height="8" fill="#c4c4c4" stroke="#888"/>
<rect x="145.5" y="498.5" width="7" height="8" fill="#c4c4c4" stroke="#888"/>
<rect x="205.5" y="498.5" width="7" height="8" fill="#c4c4c4" stroke="#888"/>
<polyline points="8.0,612.5 195.4,612.5 196.8,614.0 216.5,614.0 217.8,615.5 236.2,615.5 237.5,616.8 248.0,616.8" fill="none" stroke="#0000ff" stroke-width="1"/>
<polyline points="8.0,559.0 94.3,613.4 196.0,677.0 248.0,711.9" fill="none" stroke="#ff0000" stroke-width="2.6" stroke-linejoin="round"/>
<polyline points="8.0,558.5 94.3,613.0 248.0,708.0" fill="none" stroke="#3a9a64" stroke-width="1"/>
<rect x="386" y="717" width="370" height="1" fill="#a0a0a0"/>
<rect x="676" y="491" width="1" height="255" fill="#a0a0a0"/>
<rect x="388" y="718" width="1" height="28" fill="#a8a8a8"/>
<rect x="604" y="491" width="1" height="226" fill="#dcdcdc"/>
<rect x="604" y="718" width="1" height="28" fill="#9a9a9a"/>
<rect x="520" y="507" width="1" height="5" fill="#4cd2d6"/>
<rect x="521" y="507" width="1" height="5" fill="#b8ecec"/>
<rect x="520" y="516" width="1" height="5" fill="#4cd2d6"/>
<rect x="521" y="516" width="1" height="5" fill="#b8ecec"/>
<rect x="520" y="525" width="1" height="5" fill="#4cd2d6"/>
<rect x="521" y="525" width="1" height="5" fill="#b8ecec"/>
<rect x="520" y="534" width="1" height="5" fill="#4cd2d6"/>
<rect x="521" y="534" width="1" height="5" fill="#b8ecec"/>
<rect x="520" y="543" width="1" height="5" fill="#4cd2d6"/>
<rect x="521" y="543" width="1" height="5" fill="#b8ecec"/>
<rect x="520" y="552" width="1" height="5" fill="#4cd2d6"/>
<rect x="521" y="552" width="1" height="5" fill="#b8ecec"/>
<rect x="520" y="561" width="1" height="5" fill="#4cd2d6"/>
<rect x="521" y="561" width="1" height="5" fill="#b8ecec"/>
<rect x="520" y="570" width="1" height="5" fill="#4cd2d6"/>
<rect x="521" y="570" width="1" height="5" fill="#b8ecec"/>
<rect x="520" y="579" width="1" height="5" fill="#4cd2d6"/>
<rect x="521" y="579" width="1" height="5" fill="#b8ecec"/>
<rect x="520" y="588" width="1" height="5" fill="#4cd2d6"/>
<rect x="521" y="588" width="1" height="5" fill="#b8ecec"/>
<rect x="520" y="597" width="1" height="5" fill="#4cd2d6"/>
<rect x="521" y="597" width="1" height="5" fill="#b8ecec"/>
<rect x="520" y="606" width="1" height="5" fill="#4cd2d6"/>
<rect x="521" y="606" width="1" height="5" fill="#b8ecec"/>
<rect x="520" y="615" width="1" height="5" fill="#4cd2d6"/>
<rect x="521" y="615" width="1" height="5" fill="#b8ecec"/>
<rect x="520" y="624" width="1" height="5" fill="#4cd2d6"/>
<rect x="521" y="624" width="1" height="5" fill="#b8ecec"/>
<rect x="520" y="633" width="1" height="5" fill="#4cd2d6"/>
<rect x="521" y="633" width="1" height="5" fill="#b8ecec"/>
<rect x="520" y="642" width="1" height="5" fill="#4cd2d6"/>
<rect x="521" y="642" width="1" height="5" fill="#b8ecec"/>
<rect x="520" y="651" width="1" height="5" fill="#4cd2d6"/>
<rect x="521" y="651" width="1" height="5" fill="#b8ecec"/>
<rect x="520" y="660" width="1" height="5" fill="#4cd2d6"/>
<rect x="521" y="660" width="1" height="5" fill="#b8ecec"/>
<rect x="520" y="669" width="1" height="5" fill="#4cd2d6"/>
<rect x="521" y="669" width="1" height="5" fill="#b8ecec"/>
<rect x="520" y="678" width="1" height="5" fill="#4cd2d6"/>
<rect x="521" y="678" width="1" height="5" fill="#b8ecec"/>
<rect x="520" y="687" width="1" height="5" fill="#4cd2d6"/>
<rect x="521" y="687" width="1" height="5" fill="#b8ecec"/>
<rect x="520" y="696" width="1" height="5" fill="#4cd2d6"/>
<rect x="521" y="696" width="1" height="5" fill="#b8ecec"/>
<rect x="520" y="705" width="1" height="5" fill="#4cd2d6"/>
<rect x="521" y="705" width="1" height="5" fill="#b8ecec"/>
<rect x="520" y="714" width="1" height="3" fill="#4cd2d6"/>
<rect x="521" y="714" width="1" height="3" fill="#b8ecec"/>
<rect x="677" y="500" width="3" height="1" fill="#8a8a8a"/>
<rect x="677" y="510" width="9" height="1" fill="#8a8a8a"/>
<rect x="677" y="520" width="3" height="1" fill="#8a8a8a"/>
<rect x="677" y="530" width="3" height="1" fill="#8a8a8a"/>
<rect x="677" y="541" width="3" height="1" fill="#8a8a8a"/>
<rect x="677" y="551" width="3" height="1" fill="#8a8a8a"/>
<rect x="677" y="561" width="9" height="1" fill="#8a8a8a"/>
<rect x="677" y="571" width="3" height="1" fill="#8a8a8a"/>
<rect x="677" y="581" width="3" height="1" fill="#8a8a8a"/>
<rect x="677" y="592" width="3" height="1" fill="#8a8a8a"/>
<rect x="677" y="602" width="3" height="1" fill="#8a8a8a"/>
<rect x="677" y="612" width="9" height="1" fill="#8a8a8a"/>
<rect x="677" y="622" width="3" height="1" fill="#8a8a8a"/>
<rect x="677" y="632" width="3" height="1" fill="#8a8a8a"/>
<rect x="677" y="643" width="3" height="1" fill="#8a8a8a"/>
<rect x="677" y="653" width="3" height="1" fill="#8a8a8a"/>
<rect x="677" y="663" width="9" height="1" fill="#8a8a8a"/>
<rect x="677" y="673" width="3" height="1" fill="#8a8a8a"/>
<rect x="677" y="683" width="3" height="1" fill="#8a8a8a"/>
<rect x="677" y="694" width="3" height="1" fill="#8a8a8a"/>
<rect x="677" y="704" width="3" height="1" fill="#8a8a8a"/>
<rect x="677" y="714" width="9" height="1" fill="#8a8a8a"/>
<rect x="386" y="612" width="290" height="1" fill="#000"/>
<rect x="391.5" y="498.5" width="7" height="8" fill="#c4c4c4" stroke="#888"/>
<rect x="523.5" y="498.5" width="7" height="8" fill="#c4c4c4" stroke="#888"/>
<rect x="583.5" y="498.5" width="7" height="8" fill="#c4c4c4" stroke="#888"/>
<polyline points="386.0,618.7 401.4,620.0 411.9,622.6 429.0,624.7 566.9,625.2 603.6,624.4 614.2,622.6 626.0,622.6" fill="none" stroke="#0000ff" stroke-width="1"/>
<polyline points="386.0,672.0 488.0,612.0 519.6,593.7 566.9,564.8 606.3,537.2 626.8,522.8" fill="none" stroke="#ff0000" stroke-width="2.6" stroke-linejoin="round"/>
<polyline points="386.0,666.7 626.0,511.0" fill="none" stroke="#3a9a64" stroke-width="1"/>
<rect x="764" y="717" width="370" height="1" fill="#a0a0a0"/>
<rect x="1054" y="491" width="1" height="255" fill="#a0a0a0"/>
<rect x="766" y="718" width="1" height="28" fill="#a8a8a8"/>
<rect x="982" y="491" width="1" height="226" fill="#dcdcdc"/>
<rect x="982" y="718" width="1" height="28" fill="#9a9a9a"/>
<rect x="898" y="507" width="1" height="5" fill="#4cd2d6"/>
<rect x="899" y="507" width="1" height="5" fill="#b8ecec"/>
<rect x="898" y="516" width="1" height="5" fill="#4cd2d6"/>
<rect x="899" y="516" width="1" height="5" fill="#b8ecec"/>
<rect x="898" y="525" width="1" height="5" fill="#4cd2d6"/>
<rect x="899" y="525" width="1" height="5" fill="#b8ecec"/>
<rect x="898" y="534" width="1" height="5" fill="#4cd2d6"/>
<rect x="899" y="534" width="1" height="5" fill="#b8ecec"/>
<rect x="898" y="543" width="1" height="5" fill="#4cd2d6"/>
<rect x="899" y="543" width="1" height="5" fill="#b8ecec"/>
<rect x="898" y="552" width="1" height="5" fill="#4cd2d6"/>
<rect x="899" y="552" width="1" height="5" fill="#b8ecec"/>
<rect x="898" y="561" width="1" height="5" fill="#4cd2d6"/>
<rect x="899" y="561" width="1" height="5" fill="#b8ecec"/>
<rect x="898" y="570" width="1" height="5" fill="#4cd2d6"/>
<rect x="899" y="570" width="1" height="5" fill="#b8ecec"/>
<rect x="898" y="579" width="1" height="5" fill="#4cd2d6"/>
<rect x="899" y="579" width="1" height="5" fill="#b8ecec"/>
<rect x="898" y="588" width="1" height="5" fill="#4cd2d6"/>
<rect x="899" y="588" width="1" height="5" fill="#b8ecec"/>
<rect x="898" y="597" width="1" height="5" fill="#4cd2d6"/>
<rect x="899" y="597" width="1" height="5" fill="#b8ecec"/>
<rect x="898" y="606" width="1" height="5" fill="#4cd2d6"/>
<rect x="899" y="606" width="1" height="5" fill="#b8ecec"/>
<rect x="898" y="615" width="1" height="5" fill="#4cd2d6"/>
<rect x="899" y="615" width="1" height="5" fill="#b8ecec"/>
<rect x="898" y="624" width="1" height="5" fill="#4cd2d6"/>
<rect x="899" y="624" width="1" height="5" fill="#b8ecec"/>
<rect x="898" y="633" width="1" height="5" fill="#4cd2d6"/>
<rect x="899" y="633" width="1" height="5" fill="#b8ecec"/>
<rect x="898" y="642" width="1" height="5" fill="#4cd2d6"/>
<rect x="899" y="642" width="1" height="5" fill="#b8ecec"/>
<rect x="898" y="651" width="1" height="5" fill="#4cd2d6"/>
<rect x="899" y="651" width="1" height="5" fill="#b8ecec"/>
<rect x="898" y="660" width="1" height="5" fill="#4cd2d6"/>
<rect x="899" y="660" width="1" height="5" fill="#b8ecec"/>
<rect x="898" y="669" width="1" height="5" fill="#4cd2d6"/>
<rect x="899" y="669" width="1" height="5" fill="#b8ecec"/>
<rect x="898" y="678" width="1" height="5" fill="#4cd2d6"/>
<rect x="899" y="678" width="1" height="5" fill="#b8ecec"/>
<rect x="898" y="687" width="1" height="5" fill="#4cd2d6"/>
<rect x="899" y="687" width="1" height="5" fill="#b8ecec"/>
<rect x="898" y="696" width="1" height="5" fill="#4cd2d6"/>
<rect x="899" y="696" width="1" height="5" fill="#b8ecec"/>
<rect x="898" y="705" width="1" height="5" fill="#4cd2d6"/>
<rect x="899" y="705" width="1" height="5" fill="#b8ecec"/>
<rect x="898" y="714" width="1" height="3" fill="#4cd2d6"/>
<rect x="899" y="714" width="1" height="3" fill="#b8ecec"/>
<rect x="1055" y="492" width="3" height="1" fill="#8a8a8a"/>
<rect x="1055" y="500" width="9" height="1" fill="#8a8a8a"/>
<rect x="1055" y="507" width="3" height="1" fill="#8a8a8a"/>
<rect x="1055" y="514" width="3" height="1" fill="#8a8a8a"/>
<rect x="1055" y="522" width="3" height="1" fill="#8a8a8a"/>
<rect x="1055" y="530" width="3" height="1" fill="#8a8a8a"/>
<rect x="1055" y="537" width="9" height="1" fill="#8a8a8a"/>
<rect x="1055" y="544" width="3" height="1" fill="#8a8a8a"/>
<rect x="1055" y="552" width="3" height="1" fill="#8a8a8a"/>
<rect x="1055" y="560" width="3" height="1" fill="#8a8a8a"/>
<rect x="1055" y="567" width="3" height="1" fill="#8a8a8a"/>
<rect x="1055" y="574" width="9" height="1" fill="#8a8a8a"/>
<rect x="1055" y="582" width="3" height="1" fill="#8a8a8a"/>
<rect x="1055" y="590" width="3" height="1" fill="#8a8a8a"/>
<rect x="1055" y="597" width="3" height="1" fill="#8a8a8a"/>
<rect x="1055" y="604" width="3" height="1" fill="#8a8a8a"/>
<rect x="1055" y="612" width="9" height="1" fill="#8a8a8a"/>
<rect x="1055" y="620" width="3" height="1" fill="#8a8a8a"/>
<rect x="1055" y="627" width="3" height="1" fill="#8a8a8a"/>
<rect x="1055" y="634" width="3" height="1" fill="#8a8a8a"/>
<rect x="1055" y="642" width="3" height="1" fill="#8a8a8a"/>
<rect x="1055" y="650" width="9" height="1" fill="#8a8a8a"/>
<rect x="1055" y="657" width="3" height="1" fill="#8a8a8a"/>
<rect x="1055" y="664" width="3" height="1" fill="#8a8a8a"/>
<rect x="1055" y="672" width="3" height="1" fill="#8a8a8a"/>
<rect x="1055" y="680" width="3" height="1" fill="#8a8a8a"/>
<rect x="1055" y="687" width="9" height="1" fill="#8a8a8a"/>
<rect x="1055" y="694" width="3" height="1" fill="#8a8a8a"/>
<rect x="1055" y="702" width="3" height="1" fill="#8a8a8a"/>
<rect x="1055" y="710" width="3" height="1" fill="#8a8a8a"/>
<rect x="1055" y="717" width="3" height="1" fill="#8a8a8a"/>
<rect x="764" y="612" width="290" height="1" fill="#000"/>
<rect x="769.5" y="498.5" width="7" height="8" fill="#c4c4c4" stroke="#888"/>
<rect x="901.5" y="498.5" width="7" height="8" fill="#c4c4c4" stroke="#888"/>
<rect x="961.5" y="498.5" width="7" height="8" fill="#c4c4c4" stroke="#888"/>
<polyline points="764.0,612.5 1005.0,612.5" fill="none" stroke="#0000ff" stroke-width="1"/>
<polyline points="764.0,650.2 826.7,612.1 897.6,575.3 984.3,522.8 1005.3,511.0" fill="none" stroke="#ff0000" stroke-width="2.6" stroke-linejoin="round"/>
<polyline points="764.0,650.2 826.7,612.1 897.6,575.3 984.3,522.8 1005.3,511.0" fill="none" stroke="#3a9a64" stroke-width="1"/>
<rect x="8" y="1014" width="370" height="1" fill="#a0a0a0"/>
<rect x="298" y="788" width="1" height="255" fill="#a0a0a0"/>
<rect x="10" y="1015" width="1" height="28" fill="#a8a8a8"/>
<rect x="226" y="788" width="1" height="226" fill="#dcdcdc"/>
<rect x="226" y="1015" width="1" height="28" fill="#9a9a9a"/>
<rect x="142" y="804" width="1" height="5" fill="#4cd2d6"/>
<rect x="143" y="804" width="1" height="5" fill="#b8ecec"/>
<rect x="142" y="813" width="1" height="5" fill="#4cd2d6"/>
<rect x="143" y="813" width="1" height="5" fill="#b8ecec"/>
<rect x="142" y="822" width="1" height="5" fill="#4cd2d6"/>
<rect x="143" y="822" width="1" height="5" fill="#b8ecec"/>
<rect x="142" y="831" width="1" height="5" fill="#4cd2d6"/>
<rect x="143" y="831" width="1" height="5" fill="#b8ecec"/>
<rect x="142" y="840" width="1" height="5" fill="#4cd2d6"/>
<rect x="143" y="840" width="1" height="5" fill="#b8ecec"/>
<rect x="142" y="849" width="1" height="5" fill="#4cd2d6"/>
<rect x="143" y="849" width="1" height="5" fill="#b8ecec"/>
<rect x="142" y="858" width="1" height="5" fill="#4cd2d6"/>
<rect x="143" y="858" width="1" height="5" fill="#b8ecec"/>
<rect x="142" y="867" width="1" height="5" fill="#4cd2d6"/>
<rect x="143" y="867" width="1" height="5" fill="#b8ecec"/>
<rect x="142" y="876" width="1" height="5" fill="#4cd2d6"/>
<rect x="143" y="876" width="1" height="5" fill="#b8ecec"/>
<rect x="142" y="885" width="1" height="5" fill="#4cd2d6"/>
<rect x="143" y="885" width="1" height="5" fill="#b8ecec"/>
<rect x="142" y="894" width="1" height="5" fill="#4cd2d6"/>
<rect x="143" y="894" width="1" height="5" fill="#b8ecec"/>
<rect x="142" y="903" width="1" height="5" fill="#4cd2d6"/>
<rect x="143" y="903" width="1" height="5" fill="#b8ecec"/>
<rect x="142" y="912" width="1" height="5" fill="#4cd2d6"/>
<rect x="143" y="912" width="1" height="5" fill="#b8ecec"/>
<rect x="142" y="921" width="1" height="5" fill="#4cd2d6"/>
<rect x="143" y="921" width="1" height="5" fill="#b8ecec"/>
<rect x="142" y="930" width="1" height="5" fill="#4cd2d6"/>
<rect x="143" y="930" width="1" height="5" fill="#b8ecec"/>
<rect x="142" y="939" width="1" height="5" fill="#4cd2d6"/>
<rect x="143" y="939" width="1" height="5" fill="#b8ecec"/>
<rect x="142" y="948" width="1" height="5" fill="#4cd2d6"/>
<rect x="143" y="948" width="1" height="5" fill="#b8ecec"/>
<rect x="142" y="957" width="1" height="5" fill="#4cd2d6"/>
<rect x="143" y="957" width="1" height="5" fill="#b8ecec"/>
<rect x="142" y="966" width="1" height="5" fill="#4cd2d6"/>
<rect x="143" y="966" width="1" height="5" fill="#b8ecec"/>
<rect x="142" y="975" width="1" height="5" fill="#4cd2d6"/>
<rect x="143" y="975" width="1" height="5" fill="#b8ecec"/>
<rect x="142" y="984" width="1" height="5" fill="#4cd2d6"/>
<rect x="143" y="984" width="1" height="5" fill="#b8ecec"/>
<rect x="142" y="993" width="1" height="5" fill="#4cd2d6"/>
<rect x="143" y="993" width="1" height="5" fill="#b8ecec"/>
<rect x="142" y="1002" width="1" height="5" fill="#4cd2d6"/>
<rect x="143" y="1002" width="1" height="5" fill="#b8ecec"/>
<rect x="142" y="1011" width="1" height="3" fill="#4cd2d6"/>
<rect x="143" y="1011" width="1" height="3" fill="#b8ecec"/>
<rect x="299" y="799" width="9" height="1" fill="#8a8a8a"/>
<rect x="299" y="810" width="3" height="1" fill="#8a8a8a"/>
<rect x="299" y="821" width="3" height="1" fill="#8a8a8a"/>
<rect x="299" y="832" width="3" height="1" fill="#8a8a8a"/>
<rect x="299" y="843" width="3" height="1" fill="#8a8a8a"/>
<rect x="299" y="854" width="9" height="1" fill="#8a8a8a"/>
<rect x="299" y="865" width="3" height="1" fill="#8a8a8a"/>
<rect x="299" y="876" width="3" height="1" fill="#8a8a8a"/>
<rect x="299" y="887" width="3" height="1" fill="#8a8a8a"/>
<rect x="299" y="898" width="3" height="1" fill="#8a8a8a"/>
<rect x="299" y="909" width="9" height="1" fill="#8a8a8a"/>
<rect x="299" y="920" width="3" height="1" fill="#8a8a8a"/>
<rect x="299" y="931" width="3" height="1" fill="#8a8a8a"/>
<rect x="299" y="942" width="3" height="1" fill="#8a8a8a"/>
<rect x="299" y="953" width="3" height="1" fill="#8a8a8a"/>
<rect x="299" y="964" width="9" height="1" fill="#8a8a8a"/>
<rect x="299" y="975" width="3" height="1" fill="#8a8a8a"/>
<rect x="299" y="986" width="3" height="1" fill="#8a8a8a"/>
<rect x="299" y="997" width="3" height="1" fill="#8a8a8a"/>
<rect x="299" y="1008" width="3" height="1" fill="#8a8a8a"/>
<rect x="8" y="909" width="290" height="1" fill="#000"/>
<rect x="13.5" y="795.5" width="7" height="8" fill="#c4c4c4" stroke="#888"/>
<rect x="145.5" y="795.5" width="7" height="8" fill="#c4c4c4" stroke="#888"/>
<rect x="205.5" y="795.5" width="7" height="8" fill="#c4c4c4" stroke="#888"/>
<polyline points="8.0,909.5 248.0,909.5" fill="none" stroke="#0000ff" stroke-width="1"/>
<polyline points="8.0,962.9 91.7,910.4 141.6,878.1 249.0,808.7" fill="none" stroke="#ff0000" stroke-width="2.6" stroke-linejoin="round"/>
<polyline points="8.0,962.9 91.7,910.4 141.6,878.1 249.0,808.7" fill="none" stroke="#3a9a64" stroke-width="1"/>
<rect x="386" y="1014" width="370" height="1" fill="#a0a0a0"/>
<rect x="676" y="788" width="1" height="255" fill="#a0a0a0"/>
<rect x="388" y="1015" width="1" height="28" fill="#a8a8a8"/>
<rect x="604" y="788" width="1" height="226" fill="#dcdcdc"/>
<rect x="604" y="1015" width="1" height="28" fill="#9a9a9a"/>
<rect x="520" y="804" width="1" height="5" fill="#4cd2d6"/>
<rect x="521" y="804" width="1" height="5" fill="#b8ecec"/>
<rect x="520" y="813" width="1" height="5" fill="#4cd2d6"/>
<rect x="521" y="813" width="1" height="5" fill="#b8ecec"/>
<rect x="520" y="822" width="1" height="5" fill="#4cd2d6"/>
<rect x="521" y="822" width="1" height="5" fill="#b8ecec"/>
<rect x="520" y="831" width="1" height="5" fill="#4cd2d6"/>
<rect x="521" y="831" width="1" height="5" fill="#b8ecec"/>
<rect x="520" y="840" width="1" height="5" fill="#4cd2d6"/>
<rect x="521" y="840" width="1" height="5" fill="#b8ecec"/>
<rect x="520" y="849" width="1" height="5" fill="#4cd2d6"/>
<rect x="521" y="849" width="1" height="5" fill="#b8ecec"/>
<rect x="520" y="858" width="1" height="5" fill="#4cd2d6"/>
<rect x="521" y="858" width="1" height="5" fill="#b8ecec"/>
<rect x="520" y="867" width="1" height="5" fill="#4cd2d6"/>
<rect x="521" y="867" width="1" height="5" fill="#b8ecec"/>
<rect x="520" y="876" width="1" height="5" fill="#4cd2d6"/>
<rect x="521" y="876" width="1" height="5" fill="#b8ecec"/>
<rect x="520" y="885" width="1" height="5" fill="#4cd2d6"/>
<rect x="521" y="885" width="1" height="5" fill="#b8ecec"/>
<rect x="520" y="894" width="1" height="5" fill="#4cd2d6"/>
<rect x="521" y="894" width="1" height="5" fill="#b8ecec"/>
<rect x="520" y="903" width="1" height="5" fill="#4cd2d6"/>
<rect x="521" y="903" width="1" height="5" fill="#b8ecec"/>
<rect x="520" y="912" width="1" height="5" fill="#4cd2d6"/>
<rect x="521" y="912" width="1" height="5" fill="#b8ecec"/>
<rect x="520" y="921" width="1" height="5" fill="#4cd2d6"/>
<rect x="521" y="921" width="1" height="5" fill="#b8ecec"/>
<rect x="520" y="930" width="1" height="5" fill="#4cd2d6"/>
<rect x="521" y="930" width="1" height="5" fill="#b8ecec"/>
<rect x="520" y="939" width="1" height="5" fill="#4cd2d6"/>
<rect x="521" y="939" width="1" height="5" fill="#b8ecec"/>
<rect x="520" y="948" width="1" height="5" fill="#4cd2d6"/>
<rect x="521" y="948" width="1" height="5" fill="#b8ecec"/>
<rect x="520" y="957" width="1" height="5" fill="#4cd2d6"/>
<rect x="521" y="957" width="1" height="5" fill="#b8ecec"/>
<rect x="520" y="966" width="1" height="5" fill="#4cd2d6"/>
<rect x="521" y="966" width="1" height="5" fill="#b8ecec"/>
<rect x="520" y="975" width="1" height="5" fill="#4cd2d6"/>
<rect x="521" y="975" width="1" height="5" fill="#b8ecec"/>
<rect x="520" y="984" width="1" height="5" fill="#4cd2d6"/>
<rect x="521" y="984" width="1" height="5" fill="#b8ecec"/>
<rect x="520" y="993" width="1" height="5" fill="#4cd2d6"/>
<rect x="521" y="993" width="1" height="5" fill="#b8ecec"/>
<rect x="520" y="1002" width="1" height="5" fill="#4cd2d6"/>
<rect x="521" y="1002" width="1" height="5" fill="#b8ecec"/>
<rect x="520" y="1011" width="1" height="3" fill="#4cd2d6"/>
<rect x="521" y="1011" width="1" height="3" fill="#b8ecec"/>
<rect x="677" y="792" width="9" height="1" fill="#8a8a8a"/>
<rect x="677" y="804" width="3" height="1" fill="#8a8a8a"/>
<rect x="677" y="815" width="3" height="1" fill="#8a8a8a"/>
<rect x="677" y="827" width="3" height="1" fill="#8a8a8a"/>
<rect x="677" y="839" width="3" height="1" fill="#8a8a8a"/>
<rect x="677" y="850" width="9" height="1" fill="#8a8a8a"/>
<rect x="677" y="862" width="3" height="1" fill="#8a8a8a"/>
<rect x="677" y="874" width="3" height="1" fill="#8a8a8a"/>
<rect x="677" y="886" width="3" height="1" fill="#8a8a8a"/>
<rect x="677" y="897" width="3" height="1" fill="#8a8a8a"/>
<rect x="677" y="909" width="9" height="1" fill="#8a8a8a"/>
<rect x="677" y="921" width="3" height="1" fill="#8a8a8a"/>
<rect x="677" y="932" width="3" height="1" fill="#8a8a8a"/>
<rect x="677" y="944" width="3" height="1" fill="#8a8a8a"/>
<rect x="677" y="956" width="3" height="1" fill="#8a8a8a"/>
<rect x="677" y="968" width="9" height="1" fill="#8a8a8a"/>
<rect x="677" y="979" width="3" height="1" fill="#8a8a8a"/>
<rect x="677" y="991" width="3" height="1" fill="#8a8a8a"/>
<rect x="677" y="1003" width="3" height="1" fill="#8a8a8a"/>
<rect x="386" y="909" width="290" height="1" fill="#000"/>
<rect x="391.5" y="795.5" width="7" height="8" fill="#c4c4c4" stroke="#888"/>
<rect x="523.5" y="795.5" width="7" height="8" fill="#c4c4c4" stroke="#888"/>
<rect x="583.5" y="795.5" width="7" height="8" fill="#c4c4c4" stroke="#888"/>
<polyline points="386.0,909.5 626.0,909.5" fill="none" stroke="#0000ff" stroke-width="1"/>
<polyline points="386.0,850.0 474.9,910.4 626.0,1008.9" fill="none" stroke="#ff0000" stroke-width="2.6" stroke-linejoin="round"/>
<polyline points="386.0,850.0 474.9,910.4 626.0,1008.9" fill="none" stroke="#3a9a64" stroke-width="1"/>
<rect x="764" y="1014" width="370" height="1" fill="#a0a0a0"/>
<rect x="1054" y="788" width="1" height="255" fill="#a0a0a0"/>
<rect x="766" y="1015" width="1" height="28" fill="#a8a8a8"/>
<rect x="982" y="788" width="1" height="226" fill="#dcdcdc"/>
<rect x="982" y="1015" width="1" height="28" fill="#9a9a9a"/>
<rect x="898" y="804" width="1" height="5" fill="#4cd2d6"/>
<rect x="899" y="804" width="1" height="5" fill="#b8ecec"/>
<rect x="898" y="813" width="1" height="5" fill="#4cd2d6"/>
<rect x="899" y="813" width="1" height="5" fill="#b8ecec"/>
<rect x="898" y="822" width="1" height="5" fill="#4cd2d6"/>
<rect x="899" y="822" width="1" height="5" fill="#b8ecec"/>
<rect x="898" y="831" width="1" height="5" fill="#4cd2d6"/>
<rect x="899" y="831" width="1" height="5" fill="#b8ecec"/>
<rect x="898" y="840" width="1" height="5" fill="#4cd2d6"/>
<rect x="899" y="840" width="1" height="5" fill="#b8ecec"/>
<rect x="898" y="849" width="1" height="5" fill="#4cd2d6"/>
<rect x="899" y="849" width="1" height="5" fill="#b8ecec"/>
<rect x="898" y="858" width="1" height="5" fill="#4cd2d6"/>
<rect x="899" y="858" width="1" height="5" fill="#b8ecec"/>
<rect x="898" y="867" width="1" height="5" fill="#4cd2d6"/>
<rect x="899" y="867" width="1" height="5" fill="#b8ecec"/>
<rect x="898" y="876" width="1" height="5" fill="#4cd2d6"/>
<rect x="899" y="876" width="1" height="5" fill="#b8ecec"/>
<rect x="898" y="885" width="1" height="5" fill="#4cd2d6"/>
<rect x="899" y="885" width="1" height="5" fill="#b8ecec"/>
<rect x="898" y="894" width="1" height="5" fill="#4cd2d6"/>
<rect x="899" y="894" width="1" height="5" fill="#b8ecec"/>
<rect x="898" y="903" width="1" height="5" fill="#4cd2d6"/>
<rect x="899" y="903" width="1" height="5" fill="#b8ecec"/>
<rect x="898" y="912" width="1" height="5" fill="#4cd2d6"/>
<rect x="899" y="912" width="1" height="5" fill="#b8ecec"/>
<rect x="898" y="921" width="1" height="5" fill="#4cd2d6"/>
<rect x="899" y="921" width="1" height="5" fill="#b8ecec"/>
<rect x="898" y="930" width="1" height="5" fill="#4cd2d6"/>
<rect x="899" y="930" width="1" height="5" fill="#b8ecec"/>
<rect x="898" y="939" width="1" height="5" fill="#4cd2d6"/>
<rect x="899" y="939" width="1" height="5" fill="#b8ecec"/>
<rect x="898" y="948" width="1" height="5" fill="#4cd2d6"/>
<rect x="899" y="948" width="1" height="5" fill="#b8ecec"/>
<rect x="898" y="957" width="1" height="5" fill="#4cd2d6"/>
<rect x="899" y="957" width="1" height="5" fill="#b8ecec"/>
<rect x="898" y="966" width="1" height="5" fill="#4cd2d6"/>
<rect x="899" y="966" width="1" height="5" fill="#b8ecec"/>
<rect x="898" y="975" width="1" height="5" fill="#4cd2d6"/>
<rect x="899" y="975" width="1" height="5" fill="#b8ecec"/>
<rect x="898" y="984" width="1" height="5" fill="#4cd2d6"/>
<rect x="899" y="984" width="1" height="5" fill="#b8ecec"/>
<rect x="898" y="993" width="1" height="5" fill="#4cd2d6"/>
<rect x="899" y="993" width="1" height="5" fill="#b8ecec"/>
<rect x="898" y="1002" width="1" height="5" fill="#4cd2d6"/>
<rect x="899" y="1002" width="1" height="5" fill="#b8ecec"/>
<rect x="898" y="1011" width="1" height="3" fill="#4cd2d6"/>
<rect x="899" y="1011" width="1" height="3" fill="#b8ecec"/>
<rect x="1055" y="793" width="3" height="1" fill="#8a8a8a"/>
<rect x="1055" y="806" width="3" height="1" fill="#8a8a8a"/>
<rect x="1055" y="819" width="3" height="1" fill="#8a8a8a"/>
<rect x="1055" y="832" width="3" height="1" fill="#8a8a8a"/>
<rect x="1055" y="844" width="9" height="1" fill="#8a8a8a"/>
<rect x="1055" y="857" width="3" height="1" fill="#8a8a8a"/>
<rect x="1055" y="870" width="3" height="1" fill="#8a8a8a"/>
<rect x="1055" y="883" width="3" height="1" fill="#8a8a8a"/>
<rect x="1055" y="896" width="3" height="1" fill="#8a8a8a"/>
<rect x="1055" y="909" width="9" height="1" fill="#8a8a8a"/>
<rect x="1055" y="922" width="3" height="1" fill="#8a8a8a"/>
<rect x="1055" y="935" width="3" height="1" fill="#8a8a8a"/>
<rect x="1055" y="948" width="3" height="1" fill="#8a8a8a"/>
<rect x="1055" y="961" width="3" height="1" fill="#8a8a8a"/>
<rect x="1055" y="974" width="9" height="1" fill="#8a8a8a"/>
<rect x="1055" y="986" width="3" height="1" fill="#8a8a8a"/>
<rect x="1055" y="999" width="3" height="1" fill="#8a8a8a"/>
<rect x="1055" y="1012" width="3" height="1" fill="#8a8a8a"/>
<rect x="764" y="909" width="290" height="1" fill="#000"/>
<rect x="769.5" y="795.5" width="7" height="8" fill="#c4c4c4" stroke="#888"/>
<rect x="901.5" y="795.5" width="7" height="8" fill="#c4c4c4" stroke="#888"/>
<rect x="961.5" y="795.5" width="7" height="8" fill="#c4c4c4" stroke="#888"/>
<polyline points="764.0,912.5 886.4,912.2 887.7,910.5 901.9,910.5 909.6,909.5 923.8,907.0 938.0,903.8 953.4,902.5 981.8,901.9 1003.6,892.9" fill="none" stroke="#0000ff" stroke-width="1"/>
<polyline points="764.0,846.0 858.2,911.7 880.0,926.4 894.2,937.3 903.2,942.5 907.7,941.2 923.8,952.1 927.7,952.1 941.8,961.8 952.1,965.7 968.9,976.6 979.2,985.0 986.9,986.3 990.8,989.5 997.2,990.1 1004.3,992.7" fill="none" stroke="#ff0000" stroke-width="2.6" stroke-linejoin="round"/>
<polyline points="764.0,844.0 858.2,911.2 880.0,924.4 899.3,936.7 925.1,954.7 944.4,970.2 963.7,980.5 970.2,986.9 986.9,995.9 1003.6,1008.8" fill="none" stroke="#3a9a64" stroke-width="1"/></svg>
<div style="position:absolute;left:12.20px;top:163.40px;font-size:17.5px;line-height:17.5px;white-space:nowrap;color:#404040;font-family:'Liberation Sans', sans-serif;">개인</div>
<div style="position:absolute;left:101.88px;top:163.25px;font-size:22.5px;line-height:22.5px;white-space:nowrap;color:#2a2a2a;font-family:'Liberation Mono', monospace;transform:scaleX(0.69);transform-origin:0 0;">432.50</div>
<div style="position:absolute;left:299px;top:194px;width:79px;height:226px;overflow:hidden">
<div style="position:absolute;left:12.03px;top:6.05px;font-size:19.5px;line-height:19.5px;white-space:nowrap;color:#6a6a6a;font-family:'Liberation Sans', sans-serif;transform:scaleX(0.86);transform-origin:0 0;">100,000</div>
</div>
<div style="position:absolute;left:299px;top:194px;width:79px;height:226px;overflow:hidden">
<div style="position:absolute;left:12.03px;top:57.55px;font-size:19.5px;line-height:19.5px;white-space:nowrap;color:#6a6a6a;font-family:'Liberation Sans', sans-serif;transform:scaleX(0.86);transform-origin:0 0;">50,000</div>
</div>
<div style="position:absolute;left:299px;top:194px;width:79px;height:226px;overflow:hidden">
<div style="position:absolute;left:12.03px;top:109.05px;font-size:19.5px;line-height:19.5px;white-space:nowrap;color:#6a6a6a;font-family:'Liberation Sans', sans-serif;transform:scaleX(0.86);transform-origin:0 0;">0</div>
</div>
<div style="position:absolute;left:299px;top:194px;width:79px;height:226px;overflow:hidden">
<div style="position:absolute;left:9.03px;top:160.55px;font-size:19.5px;line-height:19.5px;white-space:nowrap;color:#6a6a6a;font-family:'Liberation Sans', sans-serif;transform:scaleX(0.86);transform-origin:0 0;">−50,000</div>
</div>
<div style="position:absolute;left:10.72px;top:424.05px;font-size:19.5px;line-height:19.5px;white-space:nowrap;color:#505050;font-family:'Liberation Sans', sans-serif;transform:scaleX(0.86);transform-origin:0 0;">405,00</div>
<div style="position:absolute;left:226.03px;top:424.05px;font-size:19.5px;line-height:19.5px;white-space:nowrap;color:#505050;font-family:'Liberation Sans', sans-serif;transform:scaleX(0.86);transform-origin:0 0;">450,00</div>
<div style="position:absolute;left:30.50px;top:197.70px;font-size:17.5px;line-height:17.5px;white-space:nowrap;color:#ff0000;font-family:'Liberation Sans', sans-serif;">선물옵션합성</div>
<div style="position:absolute;left:161.50px;top:197.70px;font-size:17.5px;line-height:17.5px;white-space:nowrap;color:#2e8b57;font-family:'Liberation Sans', sans-serif;">선물</div>
<div style="position:absolute;left:221.50px;top:197.70px;font-size:17.5px;line-height:17.5px;white-space:nowrap;color:#0000ff;font-family:'Liberation Sans', sans-serif;">옵션</div>
<div style="position:absolute;left:390.20px;top:163.40px;font-size:17.5px;line-height:17.5px;white-space:nowrap;color:#404040;font-family:'Liberation Sans', sans-serif;">외국인</div>
<div style="position:absolute;left:479.88px;top:163.25px;font-size:22.5px;line-height:22.5px;white-space:nowrap;color:#2a2a2a;font-family:'Liberation Mono', monospace;transform:scaleX(0.69);transform-origin:0 0;">420.50</div>
<div style="position:absolute;left:677px;top:194px;width:79px;height:226px;overflow:hidden">
<div style="position:absolute;left:12.03px;top:29.45px;font-size:19.5px;line-height:19.5px;white-space:nowrap;color:#6a6a6a;font-family:'Liberation Sans', sans-serif;transform:scaleX(0.86);transform-origin:0 0;">50,000</div>
</div>
<div style="position:absolute;left:677px;top:194px;width:79px;height:226px;overflow:hidden">
<div style="position:absolute;left:12.03px;top:69.25px;font-size:19.5px;line-height:19.5px;white-space:nowrap;color:#6a6a6a;font-family:'Liberation Sans', sans-serif;transform:scaleX(0.86);transform-origin:0 0;">25,000</div>
</div>
<div style="position:absolute;left:677px;top:194px;width:79px;height:226px;overflow:hidden">
<div style="position:absolute;left:12.03px;top:109.05px;font-size:19.5px;line-height:19.5px;white-space:nowrap;color:#6a6a6a;font-family:'Liberation Sans', sans-serif;transform:scaleX(0.86);transform-origin:0 0;">0</div>
</div>
<div style="position:absolute;left:677px;top:194px;width:79px;height:226px;overflow:hidden">
<div style="position:absolute;left:9.03px;top:148.85px;font-size:19.5px;line-height:19.5px;white-space:nowrap;color:#6a6a6a;font-family:'Liberation Sans', sans-serif;transform:scaleX(0.86);transform-origin:0 0;">−25,000</div>
</div>
<div style="position:absolute;left:677px;top:194px;width:79px;height:226px;overflow:hidden">
<div style="position:absolute;left:9.03px;top:188.65px;font-size:19.5px;line-height:19.5px;white-space:nowrap;color:#6a6a6a;font-family:'Liberation Sans', sans-serif;transform:scaleX(0.86);transform-origin:0 0;">−50,000</div>
</div>
<div style="position:absolute;left:388.72px;top:424.05px;font-size:19.5px;line-height:19.5px;white-space:nowrap;color:#505050;font-family:'Liberation Sans', sans-serif;transform:scaleX(0.86);transform-origin:0 0;">405,00</div>
<div style="position:absolute;left:604.02px;top:424.05px;font-size:19.5px;line-height:19.5px;white-space:nowrap;color:#505050;font-family:'Liberation Sans', sans-serif;transform:scaleX(0.86);transform-origin:0 0;">450,00</div>
<div style="position:absolute;left:408.50px;top:197.70px;font-size:17.5px;line-height:17.5px;white-space:nowrap;color:#ff0000;font-family:'Liberation Sans', sans-serif;">선물옵션합성</div>
<div style="position:absolute;left:539.50px;top:197.70px;font-size:17.5px;line-height:17.5px;white-space:nowrap;color:#2e8b57;font-family:'Liberation Sans', sans-serif;">선물</div>
<div style="position:absolute;left:599.50px;top:197.70px;font-size:17.5px;line-height:17.5px;white-space:nowrap;color:#0000ff;font-family:'Liberation Sans', sans-serif;">옵션</div>
<div style="position:absolute;left:768.20px;top:163.40px;font-size:17.5px;line-height:17.5px;white-space:nowrap;color:#404040;font-family:'Liberation Sans', sans-serif;">금융투자</div>
<div style="position:absolute;left:857.88px;top:163.25px;font-size:22.5px;line-height:22.5px;white-space:nowrap;color:#2a2a2a;font-family:'Liberation Mono', monospace;transform:scaleX(0.69);transform-origin:0 0;">424.00</div>
<div style="position:absolute;left:1055px;top:194px;width:79px;height:226px;overflow:hidden">
<div style="position:absolute;left:12.03px;top:23.05px;font-size:19.5px;line-height:19.5px;white-space:nowrap;color:#6a6a6a;font-family:'Liberation Sans', sans-serif;transform:scaleX(0.86);transform-origin:0 0;">100,000</div>
</div>
<div style="position:absolute;left:1055px;top:194px;width:79px;height:226px;overflow:hidden">
<div style="position:absolute;left:12.03px;top:66.05px;font-size:19.5px;line-height:19.5px;white-space:nowrap;color:#6a6a6a;font-family:'Liberation Sans', sans-serif;transform:scaleX(0.86);transform-origin:0 0;">50,000</div>
</div>
<div style="position:absolute;left:1055px;top:194px;width:79px;height:226px;overflow:hidden">
<div style="position:absolute;left:12.03px;top:109.05px;font-size:19.5px;line-height:19.5px;white-space:nowrap;color:#6a6a6a;font-family:'Liberation Sans', sans-serif;transform:scaleX(0.86);transform-origin:0 0;">0</div>
</div>
<div style="position:absolute;left:1055px;top:194px;width:79px;height:226px;overflow:hidden">
<div style="position:absolute;left:9.03px;top:152.05px;font-size:19.5px;line-height:19.5px;white-space:nowrap;color:#6a6a6a;font-family:'Liberation Sans', sans-serif;transform:scaleX(0.86);transform-origin:0 0;">−50,000</div>
</div>
<div style="position:absolute;left:1055px;top:194px;width:79px;height:226px;overflow:hidden">
<div style="position:absolute;left:9.03px;top:195.05px;font-size:19.5px;line-height:19.5px;white-space:nowrap;color:#6a6a6a;font-family:'Liberation Sans', sans-serif;transform:scaleX(0.86);transform-origin:0 0;">−100,000</div>
</div>
<div style="position:absolute;left:766.73px;top:424.05px;font-size:19.5px;line-height:19.5px;white-space:nowrap;color:#505050;font-family:'Liberation Sans', sans-serif;transform:scaleX(0.86);transform-origin:0 0;">405,00</div>
<div style="position:absolute;left:982.02px;top:424.05px;font-size:19.5px;line-height:19.5px;white-space:nowrap;color:#505050;font-family:'Liberation Sans', sans-serif;transform:scaleX(0.86);transform-origin:0 0;">450,00</div>
<div style="position:absolute;left:786.50px;top:197.70px;font-size:17.5px;line-height:17.5px;white-space:nowrap;color:#ff0000;font-family:'Liberation Sans', sans-serif;">선물옵션합성</div>
<div style="position:absolute;left:917.50px;top:197.70px;font-size:17.5px;line-height:17.5px;white-space:nowrap;color:#2e8b57;font-family:'Liberation Sans', sans-serif;">선물</div>
<div style="position:absolute;left:977.50px;top:197.70px;font-size:17.5px;line-height:17.5px;white-space:nowrap;color:#0000ff;font-family:'Liberation Sans', sans-serif;">옵션</div>
<div style="position:absolute;left:12.20px;top:460.40px;font-size:17.5px;line-height:17.5px;white-space:nowrap;color:#404040;font-family:'Liberation Sans', sans-serif;">투신</div>
<div style="position:absolute;left:101.88px;top:460.25px;font-size:22.5px;line-height:22.5px;white-space:nowrap;color:#2a2a2a;font-family:'Liberation Mono', monospace;transform:scaleX(0.69);transform-origin:0 0;">423.50</div>
<div style="position:absolute;left:299px;top:491px;width:79px;height:226px;overflow:hidden">
<div style="position:absolute;left:12.03px;top:26.45px;font-size:19.5px;line-height:19.5px;white-space:nowrap;color:#6a6a6a;font-family:'Liberation Sans', sans-serif;transform:scaleX(0.86);transform-origin:0 0;">50,000</div>
</div>
<div style="position:absolute;left:299px;top:491px;width:79px;height:226px;overflow:hidden">
<div style="position:absolute;left:12.03px;top:67.75px;font-size:19.5px;line-height:19.5px;white-space:nowrap;color:#6a6a6a;font-family:'Liberation Sans', sans-serif;transform:scaleX(0.86);transform-origin:0 0;">25,000</div>
</div>
<div style="position:absolute;left:299px;top:491px;width:79px;height:226px;overflow:hidden">
<div style="position:absolute;left:12.03px;top:109.05px;font-size:19.5px;line-height:19.5px;white-space:nowrap;color:#6a6a6a;font-family:'Liberation Sans', sans-serif;transform:scaleX(0.86);transform-origin:0 0;">0</div>
</div>
<div style="position:absolute;left:299px;top:491px;width:79px;height:226px;overflow:hidden">
<div style="position:absolute;left:9.03px;top:150.35px;font-size:19.5px;line-height:19.5px;white-space:nowrap;color:#6a6a6a;font-family:'Liberation Sans', sans-serif;transform:scaleX(0.86);transform-origin:0 0;">−25,000</div>
</div>
<div style="position:absolute;left:299px;top:491px;width:79px;height:226px;overflow:hidden">
<div style="position:absolute;left:9.03px;top:191.65px;font-size:19.5px;line-height:19.5px;white-space:nowrap;color:#6a6a6a;font-family:'Liberation Sans', sans-serif;transform:scaleX(0.86);transform-origin:0 0;">−50,000</div>
</div>
<div style="position:absolute;left:10.72px;top:721.05px;font-size:19.5px;line-height:19.5px;white-space:nowrap;color:#505050;font-family:'Liberation Sans', sans-serif;transform:scaleX(0.86);transform-origin:0 0;">405,00</div>
<div style="position:absolute;left:226.03px;top:721.05px;font-size:19.5px;line-height:19.5px;white-space:nowrap;color:#505050;font-family:'Liberation Sans', sans-serif;transform:scaleX(0.86);transform-origin:0 0;">450,00</div>
<div style="position:absolute;left:30.50px;top:494.70px;font-size:17.5px;line-height:17.5px;white-space:nowrap;color:#ff0000;font-family:'Liberation Sans', sans-serif;">선물옵션합성</div>
<div style="position:absolute;left:161.50px;top:494.70px;font-size:17.5px;line-height:17.5px;white-space:nowrap;color:#2e8b57;font-family:'Liberation Sans', sans-serif;">선물</div>
<div style="position:absolute;left:221.50px;top:494.70px;font-size:17.5px;line-height:17.5px;white-space:nowrap;color:#0000ff;font-family:'Liberation Sans', sans-serif;">옵션</div>
<div style="position:absolute;left:390.20px;top:460.40px;font-size:17.5px;line-height:17.5px;white-space:nowrap;color:#404040;font-family:'Liberation Sans', sans-serif;">은행</div>
<div style="position:absolute;left:479.88px;top:460.25px;font-size:22.5px;line-height:22.5px;white-space:nowrap;color:#2a2a2a;font-family:'Liberation Mono', monospace;transform:scaleX(0.69);transform-origin:0 0;">427.00</div>
<div style="position:absolute;left:677px;top:491px;width:79px;height:226px;overflow:hidden">
<div style="position:absolute;left:12.03px;top:7.05px;font-size:19.5px;line-height:19.5px;white-space:nowrap;color:#6a6a6a;font-family:'Liberation Sans', sans-serif;transform:scaleX(0.86);transform-origin:0 0;">1,000</div>
</div>
<div style="position:absolute;left:677px;top:491px;width:79px;height:226px;overflow:hidden">
<div style="position:absolute;left:12.03px;top:58.05px;font-size:19.5px;line-height:19.5px;white-space:nowrap;color:#6a6a6a;font-family:'Liberation Sans', sans-serif;transform:scaleX(0.86);transform-origin:0 0;">500</div>
</div>
<div style="position:absolute;left:677px;top:491px;width:79px;height:226px;overflow:hidden">
<div style="position:absolute;left:12.03px;top:109.05px;font-size:19.5px;line-height:19.5px;white-space:nowrap;color:#6a6a6a;font-family:'Liberation Sans', sans-serif;transform:scaleX(0.86);transform-origin:0 0;">0</div>
</div>
<div style="position:absolute;left:677px;top:491px;width:79px;height:226px;overflow:hidden">
<div style="position:absolute;left:9.03px;top:160.05px;font-size:19.5px;line-height:19.5px;white-space:nowrap;color:#6a6a6a;font-family:'Liberation Sans', sans-serif;transform:scaleX(0.86);transform-origin:0 0;">−500</div>
</div>
<div style="position:absolute;left:388.72px;top:721.05px;font-size:19.5px;line-height:19.5px;white-space:nowrap;color:#505050;font-family:'Liberation Sans', sans-serif;transform:scaleX(0.86);transform-origin:0 0;">405,00</div>
<div style="position:absolute;left:604.02px;top:721.05px;font-size:19.5px;line-height:19.5px;white-space:nowrap;color:#505050;font-family:'Liberation Sans', sans-serif;transform:scaleX(0.86);transform-origin:0 0;">450,00</div>
<div style="position:absolute;left:408.50px;top:494.70px;font-size:17.5px;line-height:17.5px;white-space:nowrap;color:#ff0000;font-family:'Liberation Sans', sans-serif;">선물옵션합성</div>
<div style="position:absolute;left:539.50px;top:494.70px;font-size:17.5px;line-height:17.5px;white-space:nowrap;color:#2e8b57;font-family:'Liberation Sans', sans-serif;">선물</div>
<div style="position:absolute;left:599.50px;top:494.70px;font-size:17.5px;line-height:17.5px;white-space:nowrap;color:#0000ff;font-family:'Liberation Sans', sans-serif;">옵션</div>
<div style="position:absolute;left:768.20px;top:460.40px;font-size:17.5px;line-height:17.5px;white-space:nowrap;color:#404040;font-family:'Liberation Sans', sans-serif;">기타금융</div>
<div style="position:absolute;left:857.88px;top:460.25px;font-size:22.5px;line-height:22.5px;white-space:nowrap;color:#2a2a2a;font-family:'Liberation Mono', monospace;transform:scaleX(0.69);transform-origin:0 0;">420.00</div>
<div style="position:absolute;left:926.88px;top:460.25px;font-size:22.5px;line-height:22.5px;white-space:nowrap;color:#2a2a2a;font-family:'Liberation Mono', monospace;transform:scaleX(0.69);transform-origin:0 0;">419.50</div>
<div style="position:absolute;left:995.88px;top:460.25px;font-size:22.5px;line-height:22.5px;white-space:nowrap;color:#2a2a2a;font-family:'Liberation Mono', monospace;transform:scaleX(0.69);transform-origin:0 0;">419.00</div>
<div style="position:absolute;left:1064.88px;top:460.25px;font-size:22.5px;line-height:22.5px;white-space:nowrap;color:#2a2a2a;font-family:'Liberation Mono', monospace;transform:scaleX(0.69);transform-origin:0 0;">418.50</div>
<div style="position:absolute;left:1055px;top:491px;width:79px;height:226px;overflow:hidden">
<div style="position:absolute;left:12.03px;top:34.05px;font-size:19.5px;line-height:19.5px;white-space:nowrap;color:#6a6a6a;font-family:'Liberation Sans', sans-serif;transform:scaleX(0.86);transform-origin:0 0;">20</div>
</div>
<div style="position:absolute;left:1055px;top:491px;width:79px;height:226px;overflow:hidden">
<div style="position:absolute;left:12.03px;top:71.55px;font-size:19.5px;line-height:19.5px;white-space:nowrap;color:#6a6a6a;font-family:'Liberation Sans', sans-serif;transform:scaleX(0.86);transform-origin:0 0;">10</div>
</div>
<div style="position:absolute;left:1055px;top:491px;width:79px;height:226px;overflow:hidden">
<div style="position:absolute;left:12.03px;top:109.05px;font-size:19.5px;line-height:19.5px;white-space:nowrap;color:#6a6a6a;font-family:'Liberation Sans', sans-serif;transform:scaleX(0.86);transform-origin:0 0;">0</div>
</div>
<div style="position:absolute;left:1055px;top:491px;width:79px;height:226px;overflow:hidden">
<div style="position:absolute;left:9.03px;top:146.55px;font-size:19.5px;line-height:19.5px;white-space:nowrap;color:#6a6a6a;font-family:'Liberation Sans', sans-serif;transform:scaleX(0.86);transform-origin:0 0;">−10</div>
</div>
<div style="position:absolute;left:1055px;top:491px;width:79px;height:226px;overflow:hidden">
<div style="position:absolute;left:9.03px;top:184.05px;font-size:19.5px;line-height:19.5px;white-space:nowrap;color:#6a6a6a;font-family:'Liberation Sans', sans-serif;transform:scaleX(0.86);transform-origin:0 0;">−20</div>
</div>
<div style="position:absolute;left:766.73px;top:721.05px;font-size:19.5px;line-height:19.5px;white-space:nowrap;color:#505050;font-family:'Liberation Sans', sans-serif;transform:scaleX(0.86);transform-origin:0 0;">405,00</div>
<div style="position:absolute;left:982.02px;top:721.05px;font-size:19.5px;line-height:19.5px;white-space:nowrap;color:#505050;font-family:'Liberation Sans', sans-serif;transform:scaleX(0.86);transform-origin:0 0;">450,00</div>
<div style="position:absolute;left:786.50px;top:494.70px;font-size:17.5px;line-height:17.5px;white-space:nowrap;color:#ff0000;font-family:'Liberation Sans', sans-serif;">선물옵션합성</div>
<div style="position:absolute;left:917.50px;top:494.70px;font-size:17.5px;line-height:17.5px;white-space:nowrap;color:#2e8b57;font-family:'Liberation Sans', sans-serif;">선물</div>
<div style="position:absolute;left:977.50px;top:494.70px;font-size:17.5px;line-height:17.5px;white-space:nowrap;color:#0000ff;font-family:'Liberation Sans', sans-serif;">옵션</div>
<div style="position:absolute;left:12.20px;top:757.40px;font-size:17.5px;line-height:17.5px;white-space:nowrap;color:#404040;font-family:'Liberation Sans', sans-serif;">보험</div>
<div style="position:absolute;left:101.88px;top:757.25px;font-size:22.5px;line-height:22.5px;white-space:nowrap;color:#2a2a2a;font-family:'Liberation Mono', monospace;transform:scaleX(0.69);transform-origin:0 0;">422.50</div>
<div style="position:absolute;left:299px;top:788px;width:79px;height:226px;overflow:hidden">
<div style="position:absolute;left:12.03px;top:53.85px;font-size:19.5px;line-height:19.5px;white-space:nowrap;color:#6a6a6a;font-family:'Liberation Sans', sans-serif;transform:scaleX(0.86);transform-origin:0 0;">25,000</div>
</div>
<div style="position:absolute;left:299px;top:788px;width:79px;height:226px;overflow:hidden">
<div style="position:absolute;left:12.03px;top:109.05px;font-size:19.5px;line-height:19.5px;white-space:nowrap;color:#6a6a6a;font-family:'Liberation Sans', sans-serif;transform:scaleX(0.86);transform-origin:0 0;">0</div>
</div>
<div style="position:absolute;left:299px;top:788px;width:79px;height:226px;overflow:hidden">
<div style="position:absolute;left:9.03px;top:164.25px;font-size:19.5px;line-height:19.5px;white-space:nowrap;color:#6a6a6a;font-family:'Liberation Sans', sans-serif;transform:scaleX(0.86);transform-origin:0 0;">−25,000</div>
</div>
<div style="position:absolute;left:10.72px;top:1018.05px;font-size:19.5px;line-height:19.5px;white-space:nowrap;color:#505050;font-family:'Liberation Sans', sans-serif;transform:scaleX(0.86);transform-origin:0 0;">405,00</div>
<div style="position:absolute;left:226.03px;top:1018.05px;font-size:19.5px;line-height:19.5px;white-space:nowrap;color:#505050;font-family:'Liberation Sans', sans-serif;transform:scaleX(0.86);transform-origin:0 0;">450,00</div>
<div style="position:absolute;left:30.50px;top:791.70px;font-size:17.5px;line-height:17.5px;white-space:nowrap;color:#ff0000;font-family:'Liberation Sans', sans-serif;">선물옵션합성</div>
<div style="position:absolute;left:161.50px;top:791.70px;font-size:17.5px;line-height:17.5px;white-space:nowrap;color:#2e8b57;font-family:'Liberation Sans', sans-serif;">선물</div>
<div style="position:absolute;left:221.50px;top:791.70px;font-size:17.5px;line-height:17.5px;white-space:nowrap;color:#0000ff;font-family:'Liberation Sans', sans-serif;">옵션</div>
<div style="position:absolute;left:390.20px;top:757.40px;font-size:17.5px;line-height:17.5px;white-space:nowrap;color:#404040;font-family:'Liberation Sans', sans-serif;">연기금등</div>
<div style="position:absolute;left:479.88px;top:757.25px;font-size:22.5px;line-height:22.5px;white-space:nowrap;color:#2a2a2a;font-family:'Liberation Mono', monospace;transform:scaleX(0.69);transform-origin:0 0;">424.00</div>
<div style="position:absolute;left:677px;top:788px;width:79px;height:226px;overflow:hidden">
<div style="position:absolute;left:12.03px;top:50.45px;font-size:19.5px;line-height:19.5px;white-space:nowrap;color:#6a6a6a;font-family:'Liberation Sans', sans-serif;transform:scaleX(0.86);transform-origin:0 0;">2,500</div>
</div>
<div style="position:absolute;left:677px;top:788px;width:79px;height:226px;overflow:hidden">
<div style="position:absolute;left:12.03px;top:109.05px;font-size:19.5px;line-height:19.5px;white-space:nowrap;color:#6a6a6a;font-family:'Liberation Sans', sans-serif;transform:scaleX(0.86);transform-origin:0 0;">0</div>
</div>
<div style="position:absolute;left:677px;top:788px;width:79px;height:226px;overflow:hidden">
<div style="position:absolute;left:9.03px;top:167.65px;font-size:19.5px;line-height:19.5px;white-space:nowrap;color:#6a6a6a;font-family:'Liberation Sans', sans-serif;transform:scaleX(0.86);transform-origin:0 0;">−2,500</div>
</div>
<div style="position:absolute;left:388.72px;top:1018.05px;font-size:19.5px;line-height:19.5px;white-space:nowrap;color:#505050;font-family:'Liberation Sans', sans-serif;transform:scaleX(0.86);transform-origin:0 0;">405,00</div>
<div style="position:absolute;left:604.02px;top:1018.05px;font-size:19.5px;line-height:19.5px;white-space:nowrap;color:#505050;font-family:'Liberation Sans', sans-serif;transform:scaleX(0.86);transform-origin:0 0;">450,00</div>
<div style="position:absolute;left:408.50px;top:791.70px;font-size:17.5px;line-height:17.5px;white-space:nowrap;color:#ff0000;font-family:'Liberation Sans', sans-serif;">선물옵션합성</div>
<div style="position:absolute;left:539.50px;top:791.70px;font-size:17.5px;line-height:17.5px;white-space:nowrap;color:#2e8b57;font-family:'Liberation Sans', sans-serif;">선물</div>
<div style="position:absolute;left:599.50px;top:791.70px;font-size:17.5px;line-height:17.5px;white-space:nowrap;color:#0000ff;font-family:'Liberation Sans', sans-serif;">옵션</div>
<div style="position:absolute;left:768.20px;top:757.40px;font-size:17.5px;line-height:17.5px;white-space:nowrap;color:#404040;font-family:'Liberation Sans', sans-serif;">기타법인</div>
<div style="position:absolute;left:857.88px;top:757.25px;font-size:22.5px;line-height:22.5px;white-space:nowrap;color:#2a2a2a;font-family:'Liberation Mono', monospace;transform:scaleX(0.69);transform-origin:0 0;">424.00</div>
<div style="position:absolute;left:1055px;top:788px;width:79px;height:226px;overflow:hidden">
<div style="position:absolute;left:12.03px;top:44.55px;font-size:19.5px;line-height:19.5px;white-space:nowrap;color:#6a6a6a;font-family:'Liberation Sans', sans-serif;transform:scaleX(0.86);transform-origin:0 0;">2,000</div>
</div>
<div style="position:absolute;left:1055px;top:788px;width:79px;height:226px;overflow:hidden">
<div style="position:absolute;left:12.03px;top:109.05px;font-size:19.5px;line-height:19.5px;white-space:nowrap;color:#6a6a6a;font-family:'Liberation Sans', sans-serif;transform:scaleX(0.86);transform-origin:0 0;">0</div>
</div>
<div style="position:absolute;left:1055px;top:788px;width:79px;height:226px;overflow:hidden">
<div style="position:absolute;left:9.03px;top:173.55px;font-size:19.5px;line-height:19.5px;white-space:nowrap;color:#6a6a6a;font-family:'Liberation Sans', sans-serif;transform:scaleX(0.86);transform-origin:0 0;">−2,000</div>
</div>
<div style="position:absolute;left:766.73px;top:1018.05px;font-size:19.5px;line-height:19.5px;white-space:nowrap;color:#505050;font-family:'Liberation Sans', sans-serif;transform:scaleX(0.86);transform-origin:0 0;">405,00</div>
<div style="position:absolute;left:982.02px;top:1018.05px;font-size:19.5px;line-height:19.5px;white-space:nowrap;color:#505050;font-family:'Liberation Sans', sans-serif;transform:scaleX(0.86);transform-origin:0 0;">450,00</div>
<div style="position:absolute;left:786.50px;top:791.70px;font-size:17.5px;line-height:17.5px;white-space:nowrap;color:#ff0000;font-family:'Liberation Sans', sans-serif;">선물옵션합성</div>
<div style="position:absolute;left:917.50px;top:791.70px;font-size:17.5px;line-height:17.5px;white-space:nowrap;color:#2e8b57;font-family:'Liberation Sans', sans-serif;">선물</div>
<div style="position:absolute;left:977.50px;top:791.70px;font-size:17.5px;line-height:17.5px;white-space:nowrap;color:#0000ff;font-family:'Liberation Sans', sans-serif;">옵션</div>
</body></html>
